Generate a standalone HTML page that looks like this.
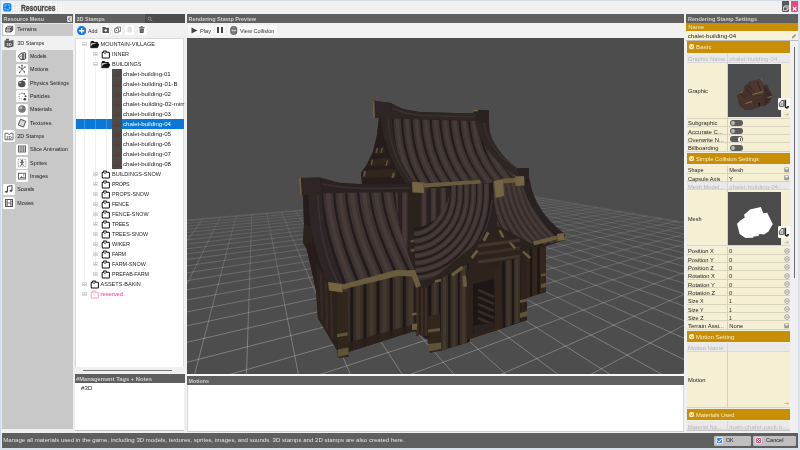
<!DOCTYPE html>
<html lang="en"><head><meta charset="utf-8"><title>Resources</title>
<style>
html,body{margin:0;padding:0}
body{width:800px;height:450px;overflow:hidden;background:#f0f0f0;position:relative;font-family:"Liberation Sans",sans-serif;}
.b{position:absolute;box-sizing:border-box}
.t{position:absolute;white-space:nowrap;transform-origin:0 50%;display:block}
svg{position:absolute;overflow:hidden}
#root{position:absolute;left:0;top:0;width:800px;height:450px;overflow:hidden;will-change:transform}
</style></head><body><div id="root">
<div class="b " style="left:0px;top:0px;width:800px;height:450px;background:#f0f0f0;"></div>
<div class="b " style="left:0px;top:0px;width:800px;height:1px;background:#d3dde9;"></div>
<div class="b " style="left:0px;top:0px;width:0.9px;height:450px;background:#cdd8e6;"></div>
<div class="b " style="left:798px;top:0px;width:2px;height:450px;background:#d9e1ea;"></div>
<div class="b " style="left:0px;top:448px;width:800px;height:2px;background:#d9e1ea;"></div>
<div class="b " style="left:13px;top:3px;width:51px;height:9.5px;background:#e6e6e6;background-image:repeating-linear-gradient(90deg,rgba(255,255,255,.55) 0 1px,transparent 1px 2.5px),repeating-linear-gradient(0deg,rgba(255,255,255,.55) 0 1px,transparent 1px 2.5px);"></div>
<svg style="left:3px;top:3px" width="8.5" height="8.5" viewBox="0 0 20 20"><rect width="20" height="20" rx="6" fill="#1a8cff"/><rect x="4.5" y="4.5" width="11" height="11" rx="2" fill="none" stroke="#9fd2ff" stroke-width="2" stroke-dasharray="4 3.3" stroke-dashoffset="2"/><circle cx="10" cy="10" r="2.6" fill="#0a6fe0"/></svg>
<span class="t" style="left:20.5px;top:0.98px;font-size:9.60px;line-height:13.44px;color:#4c4c4c;font-weight:bold;transform:scaleX(0.7028);-webkit-text-stroke:0.4px #4c4c4c;">Resources</span>
<div class="b " style="left:782px;top:0.6px;width:7.3px;height:11.7px;background:#585858;border-radius:0 0 1.5px 1.5px"></div>
<svg style="left:782px;top:4px" width="7.5" height="8" viewBox="0 0 15 16"><rect x="3" y="6" width="7" height="7" fill="none" stroke="#ddd" stroke-width="1.6"/><path d="M5.5 6V3.5h7v7H10" fill="none" stroke="#ddd" stroke-width="1.6"/></svg>
<div class="b " style="left:790.8px;top:0.6px;width:7.2px;height:11.7px;background:#e8487f;border-radius:0 0 1.5px 1.5px"></div>
<svg style="left:791px;top:5px" width="7.2" height="7" viewBox="0 0 14 14"><path d="M3.5 4l7 7M10.5 4l-7 7" stroke="#fff" stroke-width="2.4" fill="none"/></svg>
<div class="b " style="left:2px;top:14px;width:71px;height:9px;background:#5f5f5f;"></div>
<span class="t" style="left:3.5px;top:14.81px;font-size:5.44px;line-height:8.68px;color:#cfcfcf;font-weight:bold;">Resource Menu</span>
<div class="b " style="left:67.1px;top:15.6px;width:4.9px;height:6.3px;background:#d6d6d6;border-radius:1px"></div>
<svg style="left:67.1px;top:15.6px" width="4.9" height="6.3" viewBox="0 0 10 13"><path d="M7 2.500L3 6.500l4 4" stroke="#5a5a5a" stroke-width="2" fill="none"/></svg>
<div class="b " style="left:2px;top:23px;width:71px;height:406.3px;background:#c8c8c8;"></div>
<div class="b " style="left:2px;top:22.8px;width:71px;height:0.8px;background:#e4e4e4;"></div>
<div class="b " style="left:3.3px;top:23.65px;width:11.7px;height:11.7px;background:#fff;border-radius:1.5px"></div>
<svg style="left:4.1499999999999995px;top:24.45px" width="10" height="10" viewBox="0 0 20 20"><path d="M3.500 8.500l3.500-4h10.500l-3.500 4z" fill="#eee" stroke="#4a4a4a" stroke-width="1.700" stroke-linejoin="round"/><path d="M3.500 8.500h10.500v7.500H3.500z" fill="#999" stroke="#4a4a4a" stroke-width="1.700" stroke-linejoin="round"/><path d="M14 8.500l3.500-4v7.500L14 16z" fill="#666" stroke="#4a4a4a" stroke-width="1.700" stroke-linejoin="round"/><path d="M7 8.500v7.500M10.500 8.500v7.500M3.500 12.200h10.500" stroke="#ddd" stroke-width=".8"/></svg>
<span class="t" style="left:17.3px;top:24.79px;font-size:5.48px;line-height:8.68px;color:#1c1c1c;">Terrains</span>
<div class="b " style="left:2px;top:36.283px;width:71px;height:13.333px;background:#f0f0f0;"></div>
<div class="b " style="left:3.3px;top:36.983000000000004px;width:11.7px;height:11.7px;background:#f0f0f0;border-radius:1.5px"></div>
<svg style="left:4.1499999999999995px;top:37.78px" width="10" height="10" viewBox="0 0 20 20"><path d="M1 4.500l8 1.500 10-2v13l-10 2.500-8-2z" fill="#5a5a5a"/><path d="M4 1.500h6v4H4z" fill="#5a5a5a"/><text x="10" y="15" font-size="8.500" font-weight="bold" text-anchor="middle" fill="#e8e8e8" font-family="Liberation Sans,sans-serif">3D</text></svg>
<span class="t" style="left:17.3px;top:38.80px;font-size:5.46px;line-height:8.68px;color:#1c1c1c;">3D Stamps</span>
<div class="b " style="left:16.2px;top:50.316px;width:11.7px;height:11.7px;background:#fff;border-radius:1.5px"></div>
<svg style="left:17.05px;top:51.12px" width="10" height="10" viewBox="0 0 20 20"><path d="M2.500 10.500L8 4.500l8-1q1.200 0 1.200 1.500v9.500q0 1.500-1.200 1.800L8 17.500z" fill="#f4f4f4" stroke="#3c3c3c" stroke-width="2" stroke-linejoin="round"/><path d="M10.500 6.500l3.500-.5v9l-3.500.8z" fill="#8a8a8a" stroke="#3c3c3c" stroke-width="1.300"/><path d="M5 10.500h4" stroke="#3c3c3c" stroke-width="1.300"/></svg>
<span class="t" style="left:30px;top:51.84px;font-size:5.33px;line-height:8.68px;color:#1c1c1c;letter-spacing:-0.137px;">Models</span>
<div class="b " style="left:16.2px;top:63.649px;width:11.7px;height:11.7px;background:#fff;border-radius:1.5px"></div>
<svg style="left:17.05px;top:64.45px" width="10" height="10" viewBox="0 0 20 20"><path d="M10 3v7M4 6l6 4 6-4M10 10l-5 7M10 10l5 6" stroke="#555" stroke-width="1.6" fill="none"/><circle cx="10" cy="3" r="1.6" fill="#444"/><circle cx="4" cy="6" r="1.4" fill="#444"/><circle cx="16" cy="6" r="1.4" fill="#444"/><circle cx="5" cy="17" r="1.4" fill="#444"/><circle cx="15" cy="16" r="1.4" fill="#444"/></svg>
<span class="t" style="left:30px;top:64.84px;font-size:5.33px;line-height:8.68px;color:#1c1c1c;letter-spacing:-0.028px;">Motions</span>
<div class="b " style="left:16.2px;top:76.982px;width:11.7px;height:11.7px;background:#fff;border-radius:1.5px"></div>
<svg style="left:17.05px;top:77.78px" width="10" height="10" viewBox="0 0 20 20"><ellipse cx="9.500" cy="12" rx="7.500" ry="6.500" fill="#4e4e4e"/><path d="M10 6.500c.5-2.500 2-3.500 4-3.800" stroke="#444" stroke-width="1.600" fill="none"/><ellipse cx="15.500" cy="2.800" rx="2.600" ry="1.400" fill="#444"/><ellipse cx="6.500" cy="9.500" rx="3" ry="1.600" fill="#b8b8b8"/></svg>
<span class="t" style="left:30px;top:78.84px;font-size:5.33px;line-height:8.68px;color:#1c1c1c;letter-spacing:-0.008px;">Physics Settings</span>
<div class="b " style="left:16.2px;top:90.31500000000001px;width:11.7px;height:11.7px;background:#fff;border-radius:1.5px"></div>
<svg style="left:17.05px;top:91.12px" width="10" height="10" viewBox="0 0 20 20"><circle cx="15.500" cy="16.500" r="2.700" fill="#3e3e3e"/><circle cx="17" cy="10.500" r="1.900" fill="#4a4a4a"/><circle cx="14.500" cy="5.800" r="1.600" fill="#555"/><circle cx="10" cy="4.300" r="1.400" fill="#5a5a5a"/><circle cx="5.800" cy="6.200" r="1.300" fill="#666"/><circle cx="3.800" cy="10.500" r="1.200" fill="#6a6a6a"/><circle cx="5.200" cy="14.600" r="1.100" fill="#777"/><circle cx="8.800" cy="15.800" r="1" fill="#888"/><circle cx="10.500" cy="11" r=".9" fill="#999"/></svg>
<span class="t" style="left:30px;top:91.84px;font-size:5.33px;line-height:8.68px;color:#1c1c1c;letter-spacing:-0.056px;">Particles</span>
<div class="b " style="left:16.2px;top:103.64800000000001px;width:11.7px;height:11.7px;background:#fff;border-radius:1.5px"></div>
<svg style="left:17.05px;top:104.45px" width="10" height="10" viewBox="0 0 20 20"><circle cx="10" cy="10" r="7.5" fill="#777"/><circle cx="7.5" cy="7.5" r="3" fill="#bbb"/></svg>
<span class="t" style="left:30px;top:104.81px;font-size:5.42px;line-height:8.68px;color:#1c1c1c;">Materials</span>
<div class="b " style="left:16.2px;top:116.98100000000001px;width:11.7px;height:11.7px;background:#fff;border-radius:1.5px"></div>
<svg style="left:17.05px;top:117.78px" width="10" height="10" viewBox="0 0 20 20"><path d="M7 2.500l10.500 4-4.500 11.500-10.500-4z" fill="#d8d8d8" stroke="#4a4a4a" stroke-width="1.900" stroke-linejoin="round"/></svg>
<span class="t" style="left:30px;top:118.72px;font-size:5.69px;line-height:8.68px;color:#1c1c1c;">Textures</span>
<div class="b " style="left:3.3px;top:130.314px;width:11.7px;height:11.7px;background:#fff;border-radius:1.5px"></div>
<svg style="left:4.1499999999999995px;top:131.11px" width="10" height="10" viewBox="0 0 20 20"><path d="M2 4.500h5.500l1.500 2h3l1.500-2H18v13H2z" fill="none" stroke="#555" stroke-width="1.700"/><text x="10" y="15.500" font-size="8.500" font-weight="bold" text-anchor="middle" fill="#555" font-family="Liberation Sans,sans-serif">2D</text></svg>
<span class="t" style="left:17.3px;top:131.80px;font-size:5.46px;line-height:8.68px;color:#1c1c1c;">2D Stamps</span>
<div class="b " style="left:16.2px;top:143.647px;width:11.7px;height:11.7px;background:#fff;border-radius:1.5px"></div>
<svg style="left:17.05px;top:144.45px" width="10" height="10" viewBox="0 0 20 20"><rect x="3" y="4" width="14" height="12" fill="none" stroke="#555" stroke-width="1.8"/><path d="M3 8h14M3 12h14M8 4v12M12.500 4v12" stroke="#555" stroke-width="1.4"/></svg>
<span class="t" style="left:30px;top:144.76px;font-size:5.56px;line-height:8.68px;color:#1c1c1c;">Slice Animation</span>
<div class="b " style="left:16.2px;top:156.98px;width:11.7px;height:11.7px;background:#fff;border-radius:1.5px"></div>
<svg style="left:17.05px;top:157.78px" width="10" height="10" viewBox="0 0 20 20"><rect x="2.5" y="2.5" width="15" height="15" fill="none" stroke="#666" stroke-width="1.4" stroke-dasharray="2 1.6"/><path d="M10 6v5M6 8l4 2 4-2M10 11l-3 5M10 11l3 4" stroke="#444" stroke-width="1.8" fill="none"/><circle cx="10" cy="5.500" r="1.8" fill="#444"/></svg>
<span class="t" style="left:30px;top:158.80px;font-size:5.46px;line-height:8.68px;color:#1c1c1c;">Sprites</span>
<div class="b " style="left:16.2px;top:170.313px;width:11.7px;height:11.7px;background:#fff;border-radius:1.5px"></div>
<svg style="left:17.05px;top:171.11px" width="10" height="10" viewBox="0 0 20 20"><rect x="3" y="4.5" width="14" height="11.500" fill="none" stroke="#555" stroke-width="1.8"/><path d="M5 14l4-4 3 3 2-2 2 3z" fill="#666"/><circle cx="13.500" cy="8" r="1.3" fill="#666"/></svg>
<span class="t" style="left:30px;top:171.79px;font-size:5.49px;line-height:8.68px;color:#1c1c1c;">Images</span>
<div class="b " style="left:3.3px;top:183.646px;width:11.7px;height:11.7px;background:#fff;border-radius:1.5px"></div>
<svg style="left:4.1499999999999995px;top:184.45px" width="10" height="10" viewBox="0 0 20 20"><path d="M7 15V5l9-2v10" fill="none" stroke="#444" stroke-width="2"/><ellipse cx="5" cy="15.500" rx="2.8" ry="2.2" fill="#444"/><ellipse cx="14" cy="13.500" rx="2.8" ry="2.2" fill="#444"/></svg>
<span class="t" style="left:17.3px;top:184.84px;font-size:5.33px;line-height:8.68px;color:#1c1c1c;letter-spacing:-0.217px;">Sounds</span>
<div class="b " style="left:3.3px;top:196.97899999999998px;width:11.7px;height:11.7px;background:#fff;border-radius:1.5px"></div>
<svg style="left:4.1499999999999995px;top:197.78px" width="10" height="10" viewBox="0 0 20 20"><rect x="3" y="3" width="14" height="14" fill="none" stroke="#555" stroke-width="2"/><path d="M6.500 3v14M13.500 3v14M6.500 10h7" stroke="#555" stroke-width="1.6"/><path d="M3 6.500h3.500M3 10h3.500M3 13.500h3.500M13.500 6.500H17M13.500 10H17M13.500 13.500H17" stroke="#555" stroke-width="1.2"/></svg>
<span class="t" style="left:17.3px;top:198.84px;font-size:5.33px;line-height:8.68px;color:#1c1c1c;letter-spacing:-0.078px;">Movies</span>
<div class="b " style="left:74.7px;top:14px;width:110px;height:9px;background:#5f5f5f;"></div>
<span class="t" style="left:76.5px;top:14.78px;font-size:5.51px;line-height:8.68px;color:#cfcfcf;font-weight:bold;">3D Stamps</span>
<div class="b " style="left:145.3px;top:14.3px;width:39.4px;height:8.4px;background:#4c4c4c;"></div>
<svg style="left:147px;top:15.5px" width="6" height="6" viewBox="0 0 12 12"><circle cx="5" cy="5" r="3" fill="none" stroke="#999" stroke-width="1.6"/><path d="M7.200 7.200L10.500 10.500" stroke="#999" stroke-width="1.8"/></svg>
<svg style="left:76.5px;top:25.8px" width="9.4" height="9.4" viewBox="0 0 20 20"><circle cx="10" cy="10" r="10" fill="#1478f0"/><path d="M10 4.500v11M4.500 10h11" stroke="#fff" stroke-width="3"/></svg>
<span class="t" style="left:88px;top:26.98px;font-size:5.34px;line-height:8.4px;color:#333;">Add</span>
<div class="b " style="left:101px;top:25.4px;width:9px;height:9.4px;background:#fff;border-radius:1.2px"></div>
<div class="b " style="left:113px;top:25.4px;width:9px;height:9.4px;background:#fff;border-radius:1.2px"></div>
<div class="b " style="left:125px;top:25.4px;width:9px;height:9.4px;background:#fff;border-radius:1.2px"></div>
<div class="b " style="left:137.5px;top:25.4px;width:9px;height:9.4px;background:#fff;border-radius:1.2px"></div>
<svg style="left:101.8px;top:26.4px" width="7.4" height="7.4" viewBox="0 0 16 16"><path d="M1 2h6l1.500 2H15v11H1z" fill="#555"/><path d="M8 6.500v6M5 9.500h6" stroke="#fff" stroke-width="2"/></svg>
<svg style="left:113.8px;top:26.4px" width="7.4" height="7.4" viewBox="0 0 16 16"><rect x="1.500" y="5" width="8.500" height="9.500" rx="1" fill="#fff" stroke="#555" stroke-width="1.700"/><path d="M6 4V2.200h8.500v9.300H11" fill="none" stroke="#555" stroke-width="1.700"/><path d="M4 8.500l3 3M7 8.500l-3 3" stroke="#555" stroke-width="1.200"/></svg>
<svg style="left:125.8px;top:26.4px" width="7.4" height="7.4" viewBox="0 0 16 16"><path d="M3 3h10v11H3z" fill="#e2e2e2"/><path d="M5 1.500h6V5H5z" fill="#d6d6d6"/></svg>
<svg style="left:138.300px;top:26.4px" width="7.4" height="7.4" viewBox="0 0 16 16"><path d="M3 5.500h10l-1 9.500H4z" fill="#555"/><path d="M1.500 3.500h13M6 3.500V1.500h4v2" stroke="#555" stroke-width="1.800" fill="none"/><path d="M6 7.500v5.500M8 7.500v5.500M10 7.500v5.500" stroke="#999" stroke-width=".8"/></svg>
<div class="b " style="left:74.5px;top:38px;width:109.8px;height:329.5px;background:#fff;border:0.7px solid #dcdcdc;border-bottom:none"></div>
<div class="b " style="left:84.15px;top:47px;width:0.7px;height:249px;background:#f1f1f1;"></div>
<div class="b " style="left:95.15px;top:57px;width:0.7px;height:218px;background:#f1f1f1;"></div>
<div class="b " style="left:106.15px;top:67px;width:0.7px;height:103px;background:#f1f1f1;"></div>
<div class="b " style="left:75.7px;top:119.39999999999999px;width:108.3px;height:9.6px;background:#0a78d7;"></div>
<div class="b " style="left:84.15px;top:119.39999999999999px;width:0.7px;height:9.6px;background:#3d93df;"></div>
<div class="b " style="left:95.15px;top:119.39999999999999px;width:0.7px;height:9.6px;background:#3d93df;"></div>
<div class="b " style="left:106.15px;top:119.39999999999999px;width:0.7px;height:9.6px;background:#3d93df;"></div>
<div class="b " style="left:112px;top:68.89999999999999px;width:9.7px;height:100.6px;background:#4c4c4c;"></div>
<svg style="left:112px;top:69.30px" width="9.700" height="10" viewBox="0 0 20 20"><path d="M3.500 11q1-5.500 6.500-6.500 5.500 0 7 5.500 0 4.500-3.500 6-4 1-7.500-.5-2.500-1.500-2.500-4.500z" fill="#55423a"/><path d="M6 9.500q4-3 8 0" stroke="#6a5245" stroke-width="1.200" fill="none"/></svg>
<svg style="left:112px;top:79.30px" width="9.700" height="10" viewBox="0 0 20 20"><path d="M3.500 11q1-5.500 6.500-6.500 5.500 0 7 5.500 0 4.500-3.500 6-4 1-7.500-.5-2.500-1.500-2.500-4.500z" fill="#55423a"/><path d="M6 9.500q4-3 8 0" stroke="#6a5245" stroke-width="1.200" fill="none"/></svg>
<svg style="left:112px;top:89.30px" width="9.700" height="10" viewBox="0 0 20 20"><path d="M3.500 11q1-5.500 6.500-6.500 5.500 0 7 5.500 0 4.500-3.500 6-4 1-7.500-.5-2.500-1.500-2.500-4.500z" fill="#55423a"/><path d="M6 9.500q4-3 8 0" stroke="#6a5245" stroke-width="1.200" fill="none"/></svg>
<svg style="left:112px;top:99.30px" width="9.700" height="10" viewBox="0 0 20 20"><path d="M3.500 11q1-5.500 6.500-6.500 5.500 0 7 5.500 0 4.500-3.500 6-4 1-7.500-.5-2.500-1.500-2.500-4.500z" fill="#55423a"/><path d="M6 9.500q4-3 8 0" stroke="#6a5245" stroke-width="1.200" fill="none"/></svg>
<svg style="left:112px;top:109.30px" width="9.700" height="10" viewBox="0 0 20 20"><path d="M3.500 11q1-5.500 6.500-6.500 5.500 0 7 5.500 0 4.500-3.500 6-4 1-7.500-.5-2.500-1.500-2.500-4.500z" fill="#55423a"/><path d="M6 9.500q4-3 8 0" stroke="#6a5245" stroke-width="1.200" fill="none"/></svg>
<svg style="left:112px;top:119.30px" width="9.700" height="10" viewBox="0 0 20 20"><path d="M3.500 11q1-5.500 6.500-6.500 5.500 0 7 5.500 0 4.500-3.500 6-4 1-7.500-.5-2.500-1.500-2.500-4.500z" fill="#55423a"/><path d="M6 9.500q4-3 8 0" stroke="#6a5245" stroke-width="1.200" fill="none"/></svg>
<svg style="left:112px;top:129.30px" width="9.700" height="10" viewBox="0 0 20 20"><path d="M3.500 11q1-5.500 6.500-6.500 5.500 0 7 5.500 0 4.500-3.500 6-4 1-7.500-.5-2.500-1.500-2.500-4.500z" fill="#55423a"/><path d="M6 9.500q4-3 8 0" stroke="#6a5245" stroke-width="1.200" fill="none"/></svg>
<svg style="left:112px;top:139.30px" width="9.700" height="10" viewBox="0 0 20 20"><path d="M3.500 11q1-5.500 6.500-6.500 5.500 0 7 5.500 0 4.500-3.500 6-4 1-7.500-.5-2.500-1.500-2.500-4.500z" fill="#55423a"/><path d="M6 9.500q4-3 8 0" stroke="#6a5245" stroke-width="1.200" fill="none"/></svg>
<svg style="left:112px;top:149.30px" width="9.700" height="10" viewBox="0 0 20 20"><path d="M3.500 11q1-5.500 6.500-6.500 5.500 0 7 5.500 0 4.500-3.500 6-4 1-7.500-.5-2.500-1.500-2.500-4.500z" fill="#55423a"/><path d="M6 9.500q4-3 8 0" stroke="#6a5245" stroke-width="1.200" fill="none"/></svg>
<svg style="left:112px;top:159.30px" width="9.700" height="10" viewBox="0 0 20 20"><path d="M3.500 11q1-5.500 6.500-6.500 5.500 0 7 5.500 0 4.500-3.500 6-4 1-7.500-.5-2.500-1.500-2.500-4.500z" fill="#55423a"/><path d="M6 9.500q4-3 8 0" stroke="#6a5245" stroke-width="1.200" fill="none"/></svg>
<div class="b " style="left:82.4px;top:42.199999999999996px;width:4.2px;height:4.2px;background:#fcfcfc;border:0.6px solid #dadada"></div>
<div class="b " style="left:83.4px;top:44.0px;width:2.2px;height:0.6px;background:#c8c8c8;"></div>
<svg style="left:89.7px;top:39.70px" width="9.6" height="9.200" viewBox="0 0 20 19"><path d="M2 15.500V4.500q0-1.500 1.500-1.500h3.800l1.500 2h6.700v3" fill="#111" stroke="#111" stroke-width="2" stroke-linejoin="round"/><path d="M1.500 16l3-7.500h14.500l-3.500 7.500z" fill="#111" stroke="#111" stroke-width="1.500" stroke-linejoin="round"/><path d="M4.200 9.200l-1.700 5V6.500h12z" fill="#fff"/></svg>
<span class="t" style="left:100.5px;top:39.76px;font-size:5.58px;line-height:8.68px;color:#1e1e1e;">MOUNTAIN-VILLAGE</span>
<div class="b " style="left:93.4px;top:52.199999999999996px;width:4.2px;height:4.2px;background:#fcfcfc;border:0.6px solid #dadada"></div>
<div class="b " style="left:94.4px;top:54.0px;width:2.2px;height:0.6px;background:#c8c8c8;"></div>
<div class="b " style="left:95.2px;top:53.199999999999996px;width:0.6px;height:2.2px;background:#c8c8c8;"></div>
<svg style="left:100.8px;top:49.70px" width="9.6" height="9.200" viewBox="0 0 20 19"><path d="M2.500 6q0-1.500 1.500-1.500h1.500v-2.500h5.500v2.500h5q1.500 0 1.500 1.500v9q0 1.500-1.500 1.500h-12q-1.500 0-1.500-1.500z" fill="#fff" stroke="#111" stroke-width="2.1" stroke-linejoin="round"/><path d="M6 6.500h4.500" stroke="#111" stroke-width="1.700"/></svg>
<span class="t" style="left:112.0px;top:49.80px;font-size:5.46px;line-height:8.68px;color:#1e1e1e;">INNER</span>
<div class="b " style="left:93.4px;top:62.199999999999996px;width:4.2px;height:4.2px;background:#fcfcfc;border:0.6px solid #dadada"></div>
<div class="b " style="left:94.4px;top:64.0px;width:2.2px;height:0.6px;background:#c8c8c8;"></div>
<svg style="left:100.8px;top:59.70px" width="9.6" height="9.200" viewBox="0 0 20 19"><path d="M2 15.500V4.500q0-1.500 1.500-1.500h3.800l1.500 2h6.700v3" fill="#111" stroke="#111" stroke-width="2" stroke-linejoin="round"/><path d="M1.500 16l3-7.500h14.500l-3.500 7.500z" fill="#111" stroke="#111" stroke-width="1.500" stroke-linejoin="round"/><path d="M4.200 9.200l-1.700 5V6.500h12z" fill="#fff"/></svg>
<span class="t" style="left:112.0px;top:59.79px;font-size:5.47px;line-height:8.68px;color:#1e1e1e;">BUILDINGS</span>
<span class="t" style="left:123px;top:69.59px;font-size:6.06px;line-height:8.68px;color:#1e1e1e;">chalet-building-01</span>
<span class="t" style="left:123px;top:79.57px;font-size:6.13px;line-height:8.68px;color:#1e1e1e;">chalet-building-01-B</span>
<span class="t" style="left:123px;top:89.58px;font-size:6.08px;line-height:8.68px;color:#1e1e1e;">chalet-building-02</span>
<span class="t" style="left:123px;top:99.55px;font-size:6.18px;line-height:8.68px;color:#1e1e1e;">chalet-building-02-mirr</span>
<span class="t" style="left:123px;top:109.58px;font-size:6.08px;line-height:8.68px;color:#1e1e1e;">chalet-building-03</span>
<span class="t" style="left:123px;top:119.58px;font-size:6.08px;line-height:8.68px;color:#fff;">chalet-building-04</span>
<span class="t" style="left:123px;top:129.58px;font-size:6.08px;line-height:8.68px;color:#1e1e1e;">chalet-building-05</span>
<span class="t" style="left:123px;top:139.58px;font-size:6.08px;line-height:8.68px;color:#1e1e1e;">chalet-building-06</span>
<span class="t" style="left:123px;top:149.58px;font-size:6.08px;line-height:8.68px;color:#1e1e1e;">chalet-building-07</span>
<span class="t" style="left:123px;top:159.58px;font-size:6.08px;line-height:8.68px;color:#1e1e1e;">chalet-building-08</span>
<div class="b " style="left:93.4px;top:172.20000000000002px;width:4.2px;height:4.2px;background:#fcfcfc;border:0.6px solid #dadada"></div>
<div class="b " style="left:94.4px;top:174.0px;width:2.2px;height:0.6px;background:#c8c8c8;"></div>
<div class="b " style="left:95.2px;top:173.20000000000002px;width:0.6px;height:2.2px;background:#c8c8c8;"></div>
<svg style="left:100.8px;top:169.70px" width="9.6" height="9.200" viewBox="0 0 20 19"><path d="M2.500 6q0-1.500 1.500-1.500h1.500v-2.500h5.500v2.500h5q1.500 0 1.500 1.500v9q0 1.500-1.500 1.500h-12q-1.500 0-1.500-1.500z" fill="#fff" stroke="#111" stroke-width="2.1" stroke-linejoin="round"/><path d="M6 6.500h4.500" stroke="#111" stroke-width="1.700"/></svg>
<span class="t" style="left:112.0px;top:169.77px;font-size:5.55px;line-height:8.68px;color:#1e1e1e;">BUILDINGS-SNOW</span>
<div class="b " style="left:93.4px;top:182.20000000000002px;width:4.2px;height:4.2px;background:#fcfcfc;border:0.6px solid #dadada"></div>
<div class="b " style="left:94.4px;top:184.0px;width:2.2px;height:0.6px;background:#c8c8c8;"></div>
<div class="b " style="left:95.2px;top:183.20000000000002px;width:0.6px;height:2.2px;background:#c8c8c8;"></div>
<svg style="left:100.8px;top:179.70px" width="9.6" height="9.200" viewBox="0 0 20 19"><path d="M2.500 6q0-1.500 1.500-1.500h1.500v-2.500h5.500v2.500h5q1.500 0 1.500 1.500v9q0 1.500-1.500 1.500h-12q-1.500 0-1.500-1.500z" fill="#fff" stroke="#111" stroke-width="2.1" stroke-linejoin="round"/><path d="M6 6.500h4.500" stroke="#111" stroke-width="1.700"/></svg>
<span class="t" style="left:112.0px;top:179.84px;font-size:5.33px;line-height:8.68px;color:#1e1e1e;letter-spacing:-0.292px;">PROPS</span>
<div class="b " style="left:93.4px;top:192.20000000000002px;width:4.2px;height:4.2px;background:#fcfcfc;border:0.6px solid #dadada"></div>
<div class="b " style="left:94.4px;top:194.0px;width:2.2px;height:0.6px;background:#c8c8c8;"></div>
<div class="b " style="left:95.2px;top:193.20000000000002px;width:0.6px;height:2.2px;background:#c8c8c8;"></div>
<svg style="left:100.8px;top:189.70px" width="9.6" height="9.200" viewBox="0 0 20 19"><path d="M2.500 6q0-1.500 1.500-1.500h1.500v-2.500h5.500v2.500h5q1.500 0 1.500 1.500v9q0 1.500-1.500 1.500h-12q-1.500 0-1.500-1.500z" fill="#fff" stroke="#111" stroke-width="2.1" stroke-linejoin="round"/><path d="M6 6.500h4.500" stroke="#111" stroke-width="1.700"/></svg>
<span class="t" style="left:112.0px;top:189.84px;font-size:5.33px;line-height:8.68px;color:#1e1e1e;">PROPS-SNOW</span>
<div class="b " style="left:93.4px;top:202.20000000000002px;width:4.2px;height:4.2px;background:#fcfcfc;border:0.6px solid #dadada"></div>
<div class="b " style="left:94.4px;top:204.0px;width:2.2px;height:0.6px;background:#c8c8c8;"></div>
<div class="b " style="left:95.2px;top:203.20000000000002px;width:0.6px;height:2.2px;background:#c8c8c8;"></div>
<svg style="left:100.8px;top:199.70px" width="9.6" height="9.200" viewBox="0 0 20 19"><path d="M2.500 6q0-1.500 1.500-1.500h1.500v-2.500h5.500v2.500h5q1.500 0 1.500 1.500v9q0 1.500-1.500 1.500h-12q-1.500 0-1.500-1.500z" fill="#fff" stroke="#111" stroke-width="2.1" stroke-linejoin="round"/><path d="M6 6.500h4.500" stroke="#111" stroke-width="1.700"/></svg>
<span class="t" style="left:112.0px;top:199.84px;font-size:5.33px;line-height:8.68px;color:#1e1e1e;letter-spacing:-0.268px;">FENCE</span>
<div class="b " style="left:93.4px;top:212.20000000000002px;width:4.2px;height:4.2px;background:#fcfcfc;border:0.6px solid #dadada"></div>
<div class="b " style="left:94.4px;top:214.0px;width:2.2px;height:0.6px;background:#c8c8c8;"></div>
<div class="b " style="left:95.2px;top:213.20000000000002px;width:0.6px;height:2.2px;background:#c8c8c8;"></div>
<svg style="left:100.8px;top:209.70px" width="9.6" height="9.200" viewBox="0 0 20 19"><path d="M2.500 6q0-1.500 1.500-1.500h1.500v-2.500h5.500v2.500h5q1.500 0 1.500 1.500v9q0 1.500-1.500 1.500h-12q-1.500 0-1.500-1.500z" fill="#fff" stroke="#111" stroke-width="2.1" stroke-linejoin="round"/><path d="M6 6.500h4.500" stroke="#111" stroke-width="1.700"/></svg>
<span class="t" style="left:112.0px;top:209.84px;font-size:5.34px;line-height:8.68px;color:#1e1e1e;">FENCE-SNOW</span>
<div class="b " style="left:93.4px;top:222.20000000000002px;width:4.2px;height:4.2px;background:#fcfcfc;border:0.6px solid #dadada"></div>
<div class="b " style="left:94.4px;top:224.0px;width:2.2px;height:0.6px;background:#c8c8c8;"></div>
<div class="b " style="left:95.2px;top:223.20000000000002px;width:0.6px;height:2.2px;background:#c8c8c8;"></div>
<svg style="left:100.8px;top:219.70px" width="9.6" height="9.200" viewBox="0 0 20 19"><path d="M2.500 6q0-1.500 1.500-1.500h1.500v-2.500h5.500v2.500h5q1.500 0 1.500 1.500v9q0 1.500-1.500 1.500h-12q-1.500 0-1.500-1.500z" fill="#fff" stroke="#111" stroke-width="2.1" stroke-linejoin="round"/><path d="M6 6.500h4.500" stroke="#111" stroke-width="1.700"/></svg>
<span class="t" style="left:112.0px;top:219.84px;font-size:5.33px;line-height:8.68px;color:#1e1e1e;letter-spacing:-0.194px;">TREES</span>
<div class="b " style="left:93.4px;top:232.20000000000002px;width:4.2px;height:4.2px;background:#fcfcfc;border:0.6px solid #dadada"></div>
<div class="b " style="left:94.4px;top:234.0px;width:2.2px;height:0.6px;background:#c8c8c8;"></div>
<div class="b " style="left:95.2px;top:233.20000000000002px;width:0.6px;height:2.2px;background:#c8c8c8;"></div>
<svg style="left:100.8px;top:229.70px" width="9.6" height="9.200" viewBox="0 0 20 19"><path d="M2.500 6q0-1.500 1.500-1.500h1.500v-2.500h5.500v2.500h5q1.500 0 1.500 1.500v9q0 1.500-1.500 1.500h-12q-1.500 0-1.500-1.500z" fill="#fff" stroke="#111" stroke-width="2.1" stroke-linejoin="round"/><path d="M6 6.500h4.500" stroke="#111" stroke-width="1.700"/></svg>
<span class="t" style="left:112.0px;top:229.84px;font-size:5.33px;line-height:8.68px;color:#1e1e1e;letter-spacing:-0.016px;">TREES-SNOW</span>
<div class="b " style="left:93.4px;top:242.20000000000002px;width:4.2px;height:4.2px;background:#fcfcfc;border:0.6px solid #dadada"></div>
<div class="b " style="left:94.4px;top:244.0px;width:2.2px;height:0.6px;background:#c8c8c8;"></div>
<div class="b " style="left:95.2px;top:243.20000000000002px;width:0.6px;height:2.2px;background:#c8c8c8;"></div>
<svg style="left:100.8px;top:239.70px" width="9.6" height="9.200" viewBox="0 0 20 19"><path d="M2.500 6q0-1.500 1.500-1.500h1.500v-2.500h5.500v2.500h5q1.500 0 1.500 1.500v9q0 1.500-1.500 1.500h-12q-1.500 0-1.500-1.500z" fill="#fff" stroke="#111" stroke-width="2.1" stroke-linejoin="round"/><path d="M6 6.500h4.500" stroke="#111" stroke-width="1.700"/></svg>
<span class="t" style="left:112.0px;top:239.79px;font-size:5.49px;line-height:8.68px;color:#1e1e1e;">WIKER</span>
<div class="b " style="left:93.4px;top:252.20000000000002px;width:4.2px;height:4.2px;background:#fcfcfc;border:0.6px solid #dadada"></div>
<div class="b " style="left:94.4px;top:254.0px;width:2.2px;height:0.6px;background:#c8c8c8;"></div>
<div class="b " style="left:95.2px;top:253.20000000000002px;width:0.6px;height:2.2px;background:#c8c8c8;"></div>
<svg style="left:100.8px;top:249.70px" width="9.6" height="9.200" viewBox="0 0 20 19"><path d="M2.500 6q0-1.500 1.500-1.500h1.500v-2.500h5.500v2.500h5q1.500 0 1.500 1.500v9q0 1.500-1.500 1.500h-12q-1.500 0-1.500-1.500z" fill="#fff" stroke="#111" stroke-width="2.1" stroke-linejoin="round"/><path d="M6 6.500h4.500" stroke="#111" stroke-width="1.700"/></svg>
<span class="t" style="left:112.0px;top:249.84px;font-size:5.33px;line-height:8.68px;color:#1e1e1e;letter-spacing:-0.270px;">FARM</span>
<div class="b " style="left:93.4px;top:262.2px;width:4.2px;height:4.2px;background:#fcfcfc;border:0.6px solid #dadada"></div>
<div class="b " style="left:94.4px;top:264.0px;width:2.2px;height:0.6px;background:#c8c8c8;"></div>
<div class="b " style="left:95.2px;top:263.2px;width:0.6px;height:2.2px;background:#c8c8c8;"></div>
<svg style="left:100.8px;top:259.70px" width="9.6" height="9.200" viewBox="0 0 20 19"><path d="M2.500 6q0-1.500 1.500-1.500h1.500v-2.500h5.500v2.500h5q1.500 0 1.500 1.500v9q0 1.500-1.500 1.500h-12q-1.500 0-1.500-1.500z" fill="#fff" stroke="#111" stroke-width="2.1" stroke-linejoin="round"/><path d="M6 6.500h4.500" stroke="#111" stroke-width="1.700"/></svg>
<span class="t" style="left:112.0px;top:259.80px;font-size:5.46px;line-height:8.68px;color:#1e1e1e;">FARM-SNOW</span>
<div class="b " style="left:93.4px;top:272.2px;width:4.2px;height:4.2px;background:#fcfcfc;border:0.6px solid #dadada"></div>
<div class="b " style="left:94.4px;top:274.0px;width:2.2px;height:0.6px;background:#c8c8c8;"></div>
<div class="b " style="left:95.2px;top:273.2px;width:0.6px;height:2.2px;background:#c8c8c8;"></div>
<svg style="left:100.8px;top:269.70px" width="9.6" height="9.200" viewBox="0 0 20 19"><path d="M2.500 6q0-1.500 1.500-1.500h1.500v-2.500h5.500v2.500h5q1.500 0 1.500 1.500v9q0 1.500-1.500 1.500h-12q-1.500 0-1.500-1.500z" fill="#fff" stroke="#111" stroke-width="2.1" stroke-linejoin="round"/><path d="M6 6.500h4.500" stroke="#111" stroke-width="1.700"/></svg>
<span class="t" style="left:112.0px;top:269.84px;font-size:5.33px;line-height:8.68px;color:#1e1e1e;letter-spacing:-0.063px;">PREFAB-FARM</span>
<div class="b " style="left:82.4px;top:282.2px;width:4.2px;height:4.2px;background:#fcfcfc;border:0.6px solid #dadada"></div>
<div class="b " style="left:83.4px;top:284.0px;width:2.2px;height:0.6px;background:#c8c8c8;"></div>
<div class="b " style="left:84.2px;top:283.2px;width:0.6px;height:2.2px;background:#c8c8c8;"></div>
<svg style="left:89.7px;top:279.70px" width="9.6" height="9.200" viewBox="0 0 20 19"><path d="M2.500 6q0-1.500 1.500-1.500h1.500v-2.500h5.500v2.500h5q1.500 0 1.500 1.500v9q0 1.500-1.500 1.500h-12q-1.500 0-1.500-1.500z" fill="#fff" stroke="#111" stroke-width="2.1" stroke-linejoin="round"/><path d="M6 6.500h4.500" stroke="#111" stroke-width="1.700"/></svg>
<span class="t" style="left:100.5px;top:279.76px;font-size:5.56px;line-height:8.68px;color:#1e1e1e;">ASSETS-BAKIN</span>
<div class="b " style="left:82.4px;top:292.2px;width:4.2px;height:4.2px;background:#fcfcfc;border:0.6px solid #dadada"></div>
<div class="b " style="left:83.4px;top:294.0px;width:2.2px;height:0.6px;background:#c8c8c8;"></div>
<div class="b " style="left:84.2px;top:293.2px;width:0.6px;height:2.2px;background:#c8c8c8;"></div>
<svg style="left:89.7px;top:289.70px" width="9.6" height="9.200" viewBox="0 0 20 19"><path d="M2.500 6q0-1.500 1.500-1.500h1.500v-2.500h5.500v2.500h5q1.500 0 1.500 1.500v9q0 1.500-1.500 1.500h-12q-1.500 0-1.500-1.500z" fill="#fff" stroke="#f5a6cc" stroke-width="2.1" stroke-linejoin="round"/><path d="M6 6.500h4.500" stroke="#f5a6cc" stroke-width="1.700"/></svg>
<span class="t" style="left:100.5px;top:289.69px;font-size:5.78px;line-height:8.68px;color:#e8388a;">reserved</span>
<div class="b " style="left:184.5px;top:38px;width:2.5px;height:330px;background:#f0f0f0;"></div>
<div class="b " style="left:74.2px;top:366.8px;width:110px;height:7.5px;background:#f0f0f0;"></div>
<div class="b " style="left:82.5px;top:369.8px;width:89.5px;height:0.9px;background:#777;"></div>
<div class="b " style="left:74.7px;top:374.3px;width:110px;height:8.6px;background:#5f5f5f;"></div>
<span class="t" style="left:76px;top:374.75px;font-size:5.79px;line-height:8.54px;color:#cfcfcf;font-weight:bold;">#Management Tags + Notes</span>
<div class="b " style="left:74.7px;top:383.2px;width:109.5px;height:47px;background:#fff;"></div>
<div class="b " style="left:74.7px;top:430.2px;width:109.5px;height:1.2px;background:#c4c4c4;"></div>
<span class="t" style="left:81px;top:383.65px;font-size:6.10px;line-height:8.54px;color:#1e1e1e;letter-spacing:0.155px;">#3D</span>
<div class="b " style="left:187px;top:14px;width:497px;height:9px;background:#5f5f5f;"></div>
<span class="t" style="left:188.5px;top:14.79px;font-size:5.47px;line-height:8.68px;color:#cfcfcf;font-weight:bold;">Rendering Stamp Preview</span>
<div class="b " style="left:187.8px;top:25.4px;width:25px;height:9.6px;background:#f8f8f8;border-radius:1.2px"></div>
<div class="b " style="left:227.5px;top:25.4px;width:49.5px;height:9.6px;background:#f8f8f8;border-radius:1.2px"></div>
<svg style="left:190.500px;top:27px" width="7" height="7" viewBox="0 0 14 14"><path d="M1 1l12 6-12 6z" fill="#444"/></svg>
<span class="t" style="left:200px;top:26.87px;font-size:5.65px;line-height:8.4px;color:#333;">Play</span>
<div class="b " style="left:214.5px;top:25.4px;width:10.5px;height:9.6px;background:#f8f8f8;border-radius:1.2px"></div>
<div class="b " style="left:217.3px;top:27.4px;width:2px;height:5.8px;background:#444;"></div>
<div class="b " style="left:221px;top:27.4px;width:2px;height:5.8px;background:#444;"></div>
<svg style="left:230px;top:26px" width="7.500" height="9" viewBox="0 0 15 18"><rect x="1.500" y="1.200" width="12" height="15.600" rx="4.500" fill="#8e8e8e" stroke="#555" stroke-width="1.800"/><path d="M1.500 6h12M1.500 12h12" stroke="#555" stroke-width="1.700"/><path d="M3.500 7.500h3.200v3H3.500zM8.300 7.500h3.200v3H8.300z" fill="#dcdcdc"/></svg>
<span class="t" style="left:240px;top:26.90px;font-size:5.56px;line-height:8.4px;color:#333;">View Collision</span>
<svg style="left:187px;top:38px" width="497" height="336.5" viewBox="187 38 497 336.5">
<rect x="187" y="38" width="497" height="336.5" fill="#4d4d4d"/>
<defs><linearGradient id="gf" gradientUnits="userSpaceOnUse" x1="0" y1="195" x2="0" y2="345"><stop offset="0" stop-color="#fff" stop-opacity="0.06"/><stop offset="0.4" stop-color="#fff" stop-opacity="0.17"/><stop offset="1" stop-color="#fff" stop-opacity="0.32"/></linearGradient></defs>
<g stroke="url(#gf)" stroke-width="0.85" fill="none">
<line x1="185.5" y1="220.1" x2="185.0" y2="220.6"/>
<line x1="203.1" y1="218.6" x2="185.0" y2="243.6"/>
<line x1="220.0" y1="217.1" x2="185.0" y2="288.2"/>
<line x1="236.2" y1="215.7" x2="194.0" y2="376.5"/>
<line x1="251.8" y1="214.4" x2="246.4" y2="376.5"/>
<line x1="266.8" y1="213.1" x2="298.8" y2="376.5"/>
<line x1="281.2" y1="211.8" x2="351.3" y2="376.5"/>
<line x1="295.0" y1="210.6" x2="403.7" y2="376.5"/>
<line x1="308.4" y1="209.5" x2="456.1" y2="376.5"/>
<line x1="321.2" y1="208.4" x2="508.5" y2="376.5"/>
<line x1="333.6" y1="207.3" x2="560.9" y2="376.5"/>
<line x1="345.6" y1="206.3" x2="613.4" y2="376.5"/>
<line x1="357.2" y1="205.3" x2="665.8" y2="376.5"/>
<line x1="368.4" y1="204.3" x2="686.0" y2="360.6"/>
<line x1="379.2" y1="203.4" x2="686.0" y2="339.1"/>
<line x1="389.6" y1="202.5" x2="686.0" y2="321.5"/>
<line x1="399.7" y1="201.6" x2="686.0" y2="306.8"/>
<line x1="409.5" y1="200.7" x2="686.0" y2="294.5"/>
<line x1="419.0" y1="199.9" x2="686.0" y2="283.9"/>
<line x1="428.2" y1="199.1" x2="686.0" y2="274.8"/>
<line x1="437.1" y1="198.3" x2="686.0" y2="266.8"/>
<line x1="445.8" y1="197.6" x2="686.0" y2="259.7"/>
<line x1="454.2" y1="196.9" x2="686.0" y2="253.5"/>
<line x1="462.4" y1="196.2" x2="686.0" y2="247.9"/>
<line x1="470.3" y1="195.5" x2="686.0" y2="242.8"/>
<line x1="478.0" y1="194.8" x2="686.0" y2="238.3"/>
<line x1="485.5" y1="194.2" x2="686.0" y2="234.2"/>
<line x1="492.8" y1="193.5" x2="686.0" y2="230.4"/>
<line x1="499.9" y1="192.9" x2="686.0" y2="226.9"/>
<line x1="506.8" y1="192.3" x2="686.0" y2="223.8"/>
<line x1="509.5" y1="192.1" x2="686.0" y2="222.6"/>
<line x1="511.3" y1="192.4" x2="185.0" y2="220.9"/>
<line x1="517.3" y1="193.5" x2="185.0" y2="223.5"/>
<line x1="523.7" y1="194.6" x2="185.0" y2="226.3"/>
<line x1="530.4" y1="195.7" x2="185.0" y2="229.4"/>
<line x1="537.5" y1="196.9" x2="185.0" y2="232.7"/>
<line x1="544.9" y1="198.2" x2="185.0" y2="236.2"/>
<line x1="552.6" y1="199.5" x2="185.0" y2="240.1"/>
<line x1="560.9" y1="201.0" x2="185.0" y2="244.3"/>
<line x1="569.6" y1="202.5" x2="185.0" y2="249.0"/>
<line x1="578.8" y1="204.1" x2="185.0" y2="254.1"/>
<line x1="588.5" y1="205.7" x2="185.0" y2="259.7"/>
<line x1="598.9" y1="207.5" x2="185.0" y2="266.0"/>
<line x1="609.9" y1="209.4" x2="185.0" y2="273.1"/>
<line x1="621.6" y1="211.5" x2="185.0" y2="281.0"/>
<line x1="634.2" y1="213.6" x2="185.0" y2="290.0"/>
<line x1="647.6" y1="215.9" x2="185.0" y2="300.3"/>
<line x1="662.0" y1="218.4" x2="185.0" y2="312.3"/>
<line x1="677.6" y1="221.1" x2="185.0" y2="326.2"/>
<line x1="686.0" y1="225.9" x2="185.0" y2="342.8"/>
<line x1="686.0" y1="233.9" x2="185.0" y2="362.8"/>
<line x1="686.0" y1="243.7" x2="222.7" y2="376.5"/>
<line x1="686.0" y1="256.1" x2="313.7" y2="376.5"/>
<line x1="686.0" y1="272.0" x2="404.8" y2="376.5"/>
<line x1="686.0" y1="293.6" x2="495.8" y2="376.5"/>
<line x1="686.0" y1="324.2" x2="586.8" y2="376.5"/>
<line x1="686.0" y1="371.1" x2="677.9" y2="376.5"/>
<line x1="509.5" y1="192.1" x2="185.0" y2="220.1"/>
</g>
<defs><filter id="bb" x="-5%" y="-5%" width="110%" height="110%"><feGaussianBlur stdDeviation="0.55"/></filter></defs>
<g filter="url(#bb)">
<polygon points="372.5,100.5 391,103 402,109 420,112 472,113.5 476,110 489,110.3 489,122.5 490,140 500,156 514,168 518,168 529,168 529,180 534,206 546,220 565,234 565,240 546,246 546,290 527,297 527,320 497,330 472,338 441,350 430,353 428,340 414,331 348,352 338,358 337,350 318,318 316,290 307,250 303,243 304,225 303,194 300,195.5 299,178 320,177.5 340,183 362,184 361,173 366,166 373,152 377,135 379,118 373.5,118" fill="#2a211f" />
<polygon points="379,117 377,135 373,152 366,166 361,173 362,182 380,190 412,192 412,182 400,170 392,152 388,135 386,118" fill="#261e1c" />
<polygon points="375,148.5 384,147 385,153 375.5,154" fill="#30261f" />
<polygon points="370,159.5 390,158 391,165 370.5,166" fill="#30261f" />
<polygon points="362,170.5 396,169 397,177 362.5,178" fill="#30261f" />
<polygon points="375.5,153 376.5,148 377.9,148 376.9,153" fill="#5f5237" />
<polygon points="380.5,153 381.5,148 382.9,148 381.9,153" fill="#5f5237" />
<polygon points="370.5,165 371.5,159.5 373.1,159.5 372.1,165" fill="#5f5237" />
<polygon points="385.5,166 386.5,160.5 388.1,160.5 387.1,166" fill="#5f5237" />
<polygon points="363,176.5 364,171 366,171 365,176.5" fill="#5f5237" />
<polygon points="391.5,178 392.5,173 394.9,173 393.9,178" fill="#5f5237" />
<path d="M384,116 L476,119 L480,123 Q484,150 518,170 L519,181 L494,182 L480,184 L424,188 L410,185 Q390,158 384,116 Z" fill="#231c1c" />
<clipPath id="c1"><path d="M384,116 L476,119 L480,123 Q484,150 518,170 L519,181 L494,182 L480,184 L424,188 L410,185 Q390,158 384,116 Z"/></clipPath><g clip-path="url(#c1)">
<path d="M387.4,114 C387.9,140 390.9,165.0 407.4,190" fill="none" stroke="#3c3230" stroke-width="7.49"/>
<path d="M397.0,114 C397.5,140 401.0,165.0 418.5,190" fill="none" stroke="#3c3230" stroke-width="7.49"/>
<path d="M406.6,114 C407.1,140 411.1,165.0 429.6,190" fill="none" stroke="#3c3230" stroke-width="7.49"/>
<path d="M416.1,114 C416.6,140 421.1,165.0 440.7,190" fill="none" stroke="#3c3230" stroke-width="7.49"/>
<path d="M425.6,114 C426.1,140 431.1,165.0 451.8,190" fill="none" stroke="#3c3230" stroke-width="7.49"/>
<path d="M435.2,114 C435.7,140 441.2,165.0 462.9,190" fill="none" stroke="#3c3230" stroke-width="7.49"/>
<path d="M444.8,114 C445.2,140 451.2,165.0 474.0,190" fill="none" stroke="#3c3230" stroke-width="7.49"/>
<path d="M454.3,114 C454.8,140 461.3,165.0 485.1,190" fill="none" stroke="#3c3230" stroke-width="7.49"/>
<path d="M463.9,114 C464.4,140 471.4,165.0 496.2,190" fill="none" stroke="#3c3230" stroke-width="7.49"/>
<path d="M473.4,114 C473.9,140 481.4,165.0 507.3,190" fill="none" stroke="#3c3230" stroke-width="7.49"/>
<path d="M482.9,114 C483.4,140 491.4,165.0 518.4,190" fill="none" stroke="#3c3230" stroke-width="7.49"/>
<path d="M492.5,114 C493.0,140 501.5,165.0 529.5,190" fill="none" stroke="#3c3230" stroke-width="7.49"/>
<path d="M502.1,114 C502.6,140 511.6,165.0 540.6,190" fill="none" stroke="#3c3230" stroke-width="7.49"/>
<path d="M387.4,114 C387.9,140 390.9,165.0 407.4,190" fill="none" stroke="#473b39" stroke-width="3.26"/>
<path d="M397.0,114 C397.5,140 401.0,165.0 418.5,190" fill="none" stroke="#473b39" stroke-width="3.26"/>
<path d="M406.6,114 C407.1,140 411.1,165.0 429.6,190" fill="none" stroke="#473b39" stroke-width="3.26"/>
<path d="M416.1,114 C416.6,140 421.1,165.0 440.7,190" fill="none" stroke="#473b39" stroke-width="3.26"/>
<path d="M425.6,114 C426.1,140 431.1,165.0 451.8,190" fill="none" stroke="#473b39" stroke-width="3.26"/>
<path d="M435.2,114 C435.7,140 441.2,165.0 462.9,190" fill="none" stroke="#473b39" stroke-width="3.26"/>
<path d="M444.8,114 C445.2,140 451.2,165.0 474.0,190" fill="none" stroke="#473b39" stroke-width="3.26"/>
<path d="M454.3,114 C454.8,140 461.3,165.0 485.1,190" fill="none" stroke="#473b39" stroke-width="3.26"/>
<path d="M463.9,114 C464.4,140 471.4,165.0 496.2,190" fill="none" stroke="#473b39" stroke-width="3.26"/>
<path d="M473.4,114 C473.9,140 481.4,165.0 507.3,190" fill="none" stroke="#473b39" stroke-width="3.26"/>
<path d="M482.9,114 C483.4,140 491.4,165.0 518.4,190" fill="none" stroke="#473b39" stroke-width="3.26"/>
<path d="M492.5,114 C493.0,140 501.5,165.0 529.5,190" fill="none" stroke="#473b39" stroke-width="3.26"/>
<path d="M502.1,114 C502.6,140 511.6,165.0 540.6,190" fill="none" stroke="#473b39" stroke-width="3.26"/>
</g>
<path d="M380,117 L392,118 Q393,156 415,183 L411,190 Q386,160 380,117 Z" fill="#2d2524" />
<path d="M475,121 L488,122 Q490,148 519,170 L518,177 Q481,154 475,121 Z" fill="#2d2524" />
<path d="M484,123 Q487,148 517,169" fill="none" stroke="#3a2f2d" stroke-width="1.6" />
<path d="M388,119 Q390,156 412,183" fill="none" stroke="#3a2f2d" stroke-width="1.6" />
<path d="M390,103.5 Q402,110 420,112 L472,113.5 L476,112 L476,121 L420,119.5 Q402,119 390,118 Z" fill="#2d2524" />
<path d="M392,108 Q404,114 422,115.5 L474,117" fill="none" stroke="#3b302e" stroke-width="1.5" />
<polygon points="372.5,100.5 391,103 391.5,117.5 373.5,118" fill="#2f2725" />
<polygon points="372.3,100.5 374.3,100.8 375,117.8 373.2,118" fill="#6f6040" />
<polygon points="476,109.8 489,110.3 489,122.5 476,122.5" fill="#2b2323" />
<polygon points="473.5,109.5 478,109.7 478,111.3 473.5,111.3" fill="#77663f" />
<polygon points="303,194 309,194 313,230 322,262 330,284 337,292 337,350 318,318 316,290 307,250 304,225" fill="#261e1c" />
<polygon points="316,262 336,292 337,350 318,316" fill="#2c221d" />
<polygon points="320,272 322,275 323,322 321,318" fill="#3a2c25" />
<polygon points="325,280 327,283 328,331 326,327" fill="#3a2c25" />
<polygon points="330,288 332,291 333,340 331,336" fill="#3a2c25" />
<polygon points="304,224 312,226 313,244 303,243" fill="#2a201c" />
<polygon points="392,190 452,186 452,262 418,272 412,270 400,240" fill="#2a2022" />
<path d="M395.2,188 L395.2,262" stroke="#3f3331" stroke-width="5.4"/>
<path d="M395.2,188 L395.2,262" stroke="#473b39" stroke-width="2.6"/>
<path d="M404.8,188 L404.8,262" stroke="#3f3331" stroke-width="5.4"/>
<path d="M404.8,188 L404.8,262" stroke="#473b39" stroke-width="2.6"/>
<path d="M424.0,188 L424.0,262" stroke="#3f3331" stroke-width="5.4"/>
<path d="M424.0,188 L424.0,262" stroke="#473b39" stroke-width="2.6"/>
<path d="M433.6,188 L433.6,262" stroke="#3f3331" stroke-width="5.4"/>
<path d="M433.6,188 L433.6,262" stroke="#473b39" stroke-width="2.6"/>
<path d="M443.2,188 L443.2,262" stroke="#3f3331" stroke-width="5.4"/>
<path d="M443.2,188 L443.2,262" stroke="#473b39" stroke-width="2.6"/>
<path d="M452.8,188 L452.8,262" stroke="#3f3331" stroke-width="5.4"/>
<path d="M452.8,188 L452.8,262" stroke="#473b39" stroke-width="2.6"/>
<path d="M318,190 L395,191 Q397,228 408,254 L415,272 L342,288 L330,283 Q314,250 311,194 Z" fill="#231c1c" />
<clipPath id="c2"><path d="M318,190 L395,191 Q397,228 408,254 L415,272 L342,288 L330,283 Q314,250 311,194 Z"/></clipPath><g clip-path="url(#c2)">
<path d="M315.7,186 C316.2,222 326.7,258 338.7,286 L344.7,296" fill="none" stroke="#3c3230" stroke-width="9.83"/>
<path d="M327.7,186 C328.2,222 340.7,258 352.7,286 L358.7,296" fill="none" stroke="#3c3230" stroke-width="9.83"/>
<path d="M339.7,186 C340.2,222 354.7,258 366.7,286 L372.7,296" fill="none" stroke="#3c3230" stroke-width="9.83"/>
<path d="M351.7,186 C352.2,222 368.7,258 380.7,286 L386.7,296" fill="none" stroke="#3c3230" stroke-width="9.83"/>
<path d="M363.7,186 C364.2,222 382.7,258 394.7,286 L400.7,296" fill="none" stroke="#3c3230" stroke-width="9.83"/>
<path d="M375.7,186 C376.2,222 396.7,258 408.7,286 L414.7,296" fill="none" stroke="#3c3230" stroke-width="9.83"/>
<path d="M387.7,186 C388.2,222 410.7,258 422.7,286 L428.7,296" fill="none" stroke="#3c3230" stroke-width="9.83"/>
<path d="M399.7,186 C400.2,222 424.7,258 436.7,286 L442.7,296" fill="none" stroke="#3c3230" stroke-width="9.83"/>
<path d="M411.7,186 C412.2,222 438.7,258 450.7,286 L456.7,296" fill="none" stroke="#3c3230" stroke-width="9.83"/>
<path d="M315.7,186 C316.2,222 326.7,258 338.7,286 L344.7,296" fill="none" stroke="#473b39" stroke-width="4.28"/>
<path d="M327.7,186 C328.2,222 340.7,258 352.7,286 L358.7,296" fill="none" stroke="#473b39" stroke-width="4.28"/>
<path d="M339.7,186 C340.2,222 354.7,258 366.7,286 L372.7,296" fill="none" stroke="#473b39" stroke-width="4.28"/>
<path d="M351.7,186 C352.2,222 368.7,258 380.7,286 L386.7,296" fill="none" stroke="#473b39" stroke-width="4.28"/>
<path d="M363.7,186 C364.2,222 382.7,258 394.7,286 L400.7,296" fill="none" stroke="#473b39" stroke-width="4.28"/>
<path d="M375.7,186 C376.2,222 396.7,258 408.7,286 L414.7,296" fill="none" stroke="#473b39" stroke-width="4.28"/>
<path d="M387.7,186 C388.2,222 410.7,258 422.7,286 L428.7,296" fill="none" stroke="#473b39" stroke-width="4.28"/>
<path d="M399.7,186 C400.2,222 424.7,258 436.7,286 L442.7,296" fill="none" stroke="#473b39" stroke-width="4.28"/>
<path d="M411.7,186 C412.2,222 438.7,258 450.7,286 L456.7,296" fill="none" stroke="#473b39" stroke-width="4.28"/>
</g>
<path d="M308,194 L322,193 Q323,245 344,284 L330,286 Q310,248 308,194 Z" fill="#2e2625" />
<path d="M318,195 Q319,246 339,285" fill="none" stroke="#3b302e" stroke-width="1.8" />
<path d="M320,179.5 Q340,184 370,184.5 L412,183.5 L412,192.5 L370,192.5 Q340,193 320,193.5 Z" fill="#2c2423" />
<path d="M322,184 Q342,188.500 372,188.500 L410,188" fill="none" stroke="#3a2f2d" stroke-width="1.6" />
<polygon points="299,178 320,177.5 321,194.5 300,195.5" fill="#2f2725" />
<polygon points="298.8,178 300.8,178 301.8,195.5 299.8,195.5" fill="#6f6040" />
<path d="M342,288 L414,272 L414,331 L348,352 L338,352 L337,292 Z" fill="#1c1613" />
<clipPath id="c3"><path d="M342,288 L414,272 L414,331 L348,352 L338,352 L337,292 Z"/></clipPath><g clip-path="url(#c3)">
<path d="M345.3,268 L345.3,356" fill="none" stroke="#382d27" stroke-width="10.22"/>
<path d="M358.4,268 L358.4,356" fill="none" stroke="#382d27" stroke-width="10.22"/>
<path d="M371.5,268 L371.5,356" fill="none" stroke="#382d27" stroke-width="10.22"/>
<path d="M384.6,268 L384.6,356" fill="none" stroke="#382d27" stroke-width="10.22"/>
<path d="M397.7,268 L397.7,356" fill="none" stroke="#382d27" stroke-width="10.22"/>
<path d="M410.8,268 L410.8,356" fill="none" stroke="#382d27" stroke-width="10.22"/>
<path d="M423.9,268 L423.9,356" fill="none" stroke="#382d27" stroke-width="10.22"/>
<path d="M345.3,268 L345.3,356" fill="none" stroke="#43372f" stroke-width="4.45"/>
<path d="M358.4,268 L358.4,356" fill="none" stroke="#43372f" stroke-width="4.45"/>
<path d="M371.5,268 L371.5,356" fill="none" stroke="#43372f" stroke-width="4.45"/>
<path d="M384.6,268 L384.6,356" fill="none" stroke="#43372f" stroke-width="4.45"/>
<path d="M397.7,268 L397.7,356" fill="none" stroke="#43372f" stroke-width="4.45"/>
<path d="M410.8,268 L410.8,356" fill="none" stroke="#43372f" stroke-width="4.45"/>
<path d="M423.9,268 L423.9,356" fill="none" stroke="#43372f" stroke-width="4.45"/>
<polygon points="336,346 414,324 414,332 336,356" fill="#2b201a" opacity="0.9"/>
</g>
<polygon points="336,292 347.5,291 348.5,357 338,358" fill="#32261f" />
<polygon points="337,334 347.5,332.3 347.5,335.5 337,337.2" fill="#5f5237" />
<polygon points="337.5,349.5 348.5,347.5 348.5,354.5 338,357" fill="#5f5237" />
<polygon points="328,282 342,284 342.5,292.5 329,290.5" fill="#746542" />
<polygon points="342,284.5 396,270 414,270.5 414,276.5 398,276 342.5,289.5" fill="#6b5d3d" />
<polygon points="410,193 419,193 420,262 411,262" fill="#2a201d" />
<polygon points="410.5,240 419.5,239 419.5,241.5 410.5,242.5" fill="#5a4d33" />
<polygon points="410.5,249 419.5,248 419.5,251 410.5,252" fill="#5a4d33" />
<path d="M450,185 L496,183 L498,198 A84,94 0 0 1 416,286 L414,228 A38,42 0 0 0 450,185 Z" fill="#231c1c" />
<clipPath id="c4"><path d="M450,185 L496,183 L498,198 A84,94 0 0 1 416,286 L414,228 A38,42 0 0 0 450,185 Z"/></clipPath><g clip-path="url(#c4)">
<path d="M486.5,182.0 L486.5,194.0 A74.5,84.0 0 0 1 408.0,278.0" fill="none" stroke="#3c3230" stroke-width="5.30"/>
<path d="M479.9,182.0 L479.9,194.0 A67.9,76.6 0 0 1 408.0,270.6" fill="none" stroke="#3c3230" stroke-width="5.30"/>
<path d="M473.3,182.0 L473.3,194.0 A61.3,69.2 0 0 1 408.0,263.2" fill="none" stroke="#3c3230" stroke-width="5.30"/>
<path d="M466.7,182.0 L466.7,194.0 A54.7,61.8 0 0 1 408.0,255.8" fill="none" stroke="#3c3230" stroke-width="5.30"/>
<path d="M460.1,182.0 L460.1,194.0 A48.1,54.4 0 0 1 408.0,248.4" fill="none" stroke="#3c3230" stroke-width="5.30"/>
<path d="M453.5,182.0 L453.5,194.0 A41.5,47.0 0 0 1 408.0,241.0" fill="none" stroke="#3c3230" stroke-width="5.30"/>
<path d="M446.9,182.0 L446.9,194.0 A34.9,39.6 0 0 1 408.0,233.6" fill="none" stroke="#3c3230" stroke-width="5.30"/>
<path d="M486.5,182.0 L486.5,194.0 A74.5,84.0 0 0 1 408.0,278.0" fill="none" stroke="#473b39" stroke-width="2.31"/>
<path d="M479.9,182.0 L479.9,194.0 A67.9,76.6 0 0 1 408.0,270.6" fill="none" stroke="#473b39" stroke-width="2.31"/>
<path d="M473.3,182.0 L473.3,194.0 A61.3,69.2 0 0 1 408.0,263.2" fill="none" stroke="#473b39" stroke-width="2.31"/>
<path d="M466.7,182.0 L466.7,194.0 A54.7,61.8 0 0 1 408.0,255.8" fill="none" stroke="#473b39" stroke-width="2.31"/>
<path d="M460.1,182.0 L460.1,194.0 A48.1,54.4 0 0 1 408.0,248.4" fill="none" stroke="#473b39" stroke-width="2.31"/>
<path d="M453.5,182.0 L453.5,194.0 A41.5,47.0 0 0 1 408.0,241.0" fill="none" stroke="#473b39" stroke-width="2.31"/>
<path d="M446.9,182.0 L446.9,194.0 A34.9,39.6 0 0 1 408.0,233.6" fill="none" stroke="#473b39" stroke-width="2.31"/>
</g>
<path d="M494.5,194 L494.5,200 A82,90 0 0 1 416,283" fill="none" stroke="#2b2322" stroke-width="7.5"/>
<path d="M492,200 A80,87 0 0 1 416,280" fill="none" stroke="#3a2f2d" stroke-width="1.4"/>
<path d="M493,181 L529,178 Q534,212 564,234 L564,240 L534,247 L498,230 L494,200 Z" fill="#231c1c" />
<clipPath id="c5"><path d="M493,181 L529,178 Q534,212 564,234 L564,240 L534,247 L498,230 L494,200 Z"/></clipPath><g clip-path="url(#c5)">
<path d="M522.0,176 C524.0,200 536.0,224.0 561.0,244.0" fill="none" stroke="#3c3230" stroke-width="4.99"/>
<path d="M517.2,176 C518.9,200 529.6,224.0 553.6,244.0" fill="none" stroke="#3c3230" stroke-width="4.99"/>
<path d="M512.4,176 C513.8,200 523.2,224.0 546.3,244.0" fill="none" stroke="#3c3230" stroke-width="4.99"/>
<path d="M507.6,176 C508.6,200 516.8,224.0 538.9,244.0" fill="none" stroke="#3c3230" stroke-width="4.99"/>
<path d="M502.8,176 C503.5,200 510.4,224.0 531.6,244.0" fill="none" stroke="#3c3230" stroke-width="4.99"/>
<path d="M498.0,176 C498.4,200 504.0,224.0 524.2,244.0" fill="none" stroke="#3c3230" stroke-width="4.99"/>
<path d="M493.2,176 C493.3,200 497.6,224.0 516.8,244.0" fill="none" stroke="#3c3230" stroke-width="4.99"/>
<path d="M488.4,176 C488.2,200 491.2,224.0 509.5,244.0" fill="none" stroke="#3c3230" stroke-width="4.99"/>
<path d="M522.0,176 C524.0,200 536.0,224.0 561.0,244.0" fill="none" stroke="#473b39" stroke-width="2.18"/>
<path d="M517.2,176 C518.9,200 529.6,224.0 553.6,244.0" fill="none" stroke="#473b39" stroke-width="2.18"/>
<path d="M512.4,176 C513.8,200 523.2,224.0 546.3,244.0" fill="none" stroke="#473b39" stroke-width="2.18"/>
<path d="M507.6,176 C508.6,200 516.8,224.0 538.9,244.0" fill="none" stroke="#473b39" stroke-width="2.18"/>
<path d="M502.8,176 C503.5,200 510.4,224.0 531.6,244.0" fill="none" stroke="#473b39" stroke-width="2.18"/>
<path d="M498.0,176 C498.4,200 504.0,224.0 524.2,244.0" fill="none" stroke="#473b39" stroke-width="2.18"/>
<path d="M493.2,176 C493.3,200 497.6,224.0 516.8,244.0" fill="none" stroke="#473b39" stroke-width="2.18"/>
<path d="M488.4,176 C488.2,200 491.2,224.0 509.5,244.0" fill="none" stroke="#473b39" stroke-width="2.18"/>
</g>
<path d="M522,183 L530,181 Q535,212 565,234 L562,238 Q530,216 522,183 Z" fill="#2c2423" />
<polygon points="533,241.5 557,235.5 558,239 534,245.5" fill="#6b5d3d" />
<polygon points="557,234 564,233 565,240 558,241" fill="#746542" />
<polygon points="412,182 423.5,182.5 424,193 412.5,192.5" fill="#746542" />
<polygon points="423.5,183.5 480,180 481,183.5 424,187.5" fill="#6b5d3d" />
<polygon points="494,181 503,179 504,196 495.5,198" fill="#746542" />
<polygon points="503,178.5 515.5,178 515.5,182.5 503.5,183.5" fill="#6b5d3d" />
<polygon points="518.5,168 529,168 529,179 518.5,179" fill="#2b2323" />
<polygon points="515,176.5 524,176 524.5,185.5 515.5,186" fill="#746542" />
<polygon points="498,226 536,246 546,250 546,292 527,298 527,320 497,330 472,338 441,350 430,352 428,330 414,331 414,286 424,286 468,250" fill="#2c221d" />
<clipPath id="c6"><path d="M428,286 L470,262 L470,342 L440,351 L429,352 Z"/></clipPath><g clip-path="url(#c6)">
<path d="M428,286 L470,262 L470,342 L440,351 L429,352 Z" fill="#1c1613" />
<path d="M435.0,255 L435.0,356" fill="none" stroke="#382d27" stroke-width="7.41"/>
<path d="M444.5,255 L444.5,356" fill="none" stroke="#382d27" stroke-width="7.41"/>
<path d="M454.0,255 L454.0,356" fill="none" stroke="#382d27" stroke-width="7.41"/>
<path d="M463.5,255 L463.5,356" fill="none" stroke="#382d27" stroke-width="7.41"/>
<path d="M473.0,255 L473.0,356" fill="none" stroke="#382d27" stroke-width="7.41"/>
<path d="M435.0,255 L435.0,356" fill="none" stroke="#43372f" stroke-width="3.23"/>
<path d="M444.5,255 L444.5,356" fill="none" stroke="#43372f" stroke-width="3.23"/>
<path d="M454.0,255 L454.0,356" fill="none" stroke="#43372f" stroke-width="3.23"/>
<path d="M463.5,255 L463.5,356" fill="none" stroke="#43372f" stroke-width="3.23"/>
<path d="M473.0,255 L473.0,356" fill="none" stroke="#43372f" stroke-width="3.23"/>
</g>
<polygon points="414,286 428,292 429,340 414,331" fill="#2a1f1b" />
<path d="M417.5,288 L417.5,336" stroke="#3a2e28" stroke-width="2.6"/>
<path d="M422,288 L422,336" stroke="#3a2e28" stroke-width="2.6"/>
<path d="M426,288 L426,336" stroke="#3a2e28" stroke-width="2.6"/>
<polygon points="470,250 498,228 530,250 520,258 476,266" fill="#2e231e" />
<path d="M478,246 L520,240" stroke="#43342b" stroke-width="3"/>
<path d="M478,254 L520,248" stroke="#3d2f28" stroke-width="3"/>
<path d="M478,262 L520,256" stroke="#43342b" stroke-width="3"/>
<polygon points="466,270 502,262 503,328 467,340" fill="#2e221c" />
<polygon points="473,284 495,279 495,326 473,334" fill="#1d1716" />
<path d="M478,290 L494,297" stroke="#372b26" stroke-width="2.6"/>
<path d="M478,297 L494,304" stroke="#372b26" stroke-width="2.6"/>
<path d="M478,304 L494,311" stroke="#372b26" stroke-width="2.6"/>
<path d="M478,311 L494,318" stroke="#372b26" stroke-width="2.6"/>
<path d="M478,318 L494,325" stroke="#372b26" stroke-width="2.6"/>
<polygon points="473,326 495,322 495,327 474,334" fill="#2a2322" />
<polygon points="494,270 501,268 502,328 495,331" fill="#31251e" />
<clipPath id="c7"><path d="M502,262 L527,256 L527,320 L503,328 Z"/></clipPath><g clip-path="url(#c7)">
<path d="M502,262 L527,256 L527,320 L503,328 Z" fill="#1c1613" />
<path d="M508.5,250 L508.5,332" fill="none" stroke="#382d27" stroke-width="6.63"/>
<path d="M517.0,250 L517.0,332" fill="none" stroke="#382d27" stroke-width="6.63"/>
<path d="M525.5,250 L525.5,332" fill="none" stroke="#382d27" stroke-width="6.63"/>
<path d="M508.5,250 L508.5,332" fill="none" stroke="#43372f" stroke-width="2.89"/>
<path d="M517.0,250 L517.0,332" fill="none" stroke="#43372f" stroke-width="2.89"/>
<path d="M525.5,250 L525.5,332" fill="none" stroke="#43372f" stroke-width="2.89"/>
</g>
<polygon points="520,256 527,255 527,320 521,322" fill="#2d211c" />
<polygon points="520,300 527.5,298.5 527.5,301.5 520,303" fill="#5f5237" />
<polygon points="520,313 527.5,311 527.5,316 520,318" fill="#5f5237" />
<clipPath id="c8"><path d="M527,250 L546,246 L546,291 L527,298 Z"/></clipPath><g clip-path="url(#c8)">
<path d="M527,250 L546,246 L546,291 L527,298 Z" fill="#35271f" />
<path d="M531.0,244 L531.0,300" stroke="#1c1613" stroke-width="2.6"/>
<path d="M538.5,244 L538.5,300" stroke="#1c1613" stroke-width="2.6"/>
</g>
<polygon points="541,274 546.5,273 546.5,275.5 541,276.5" fill="#5f5237" />
<polygon points="541,284 546.5,283 546.5,287 541,288" fill="#5f5237" />
<polygon points="428,316 440,314 441,350 429,352" fill="#32261f" />
<polygon points="428,329.5 440,328 440,331 428,332.5" fill="#5f5237" />
<polygon points="428,344 441,342.5 441,349 429,351.5" fill="#5f5237" />
<polygon points="409.7,270.5 415,270 421,286 416,288" fill="#6b5d3d" />
<polygon points="470.5,257 476.5,249.5 478.5,251.5 472.5,259" fill="#6b5d3d" />
<polygon points="451,274 461.5,266 463.5,268.5 453,276.5" fill="#6b5d3d" />
<polygon points="462.5,276 466,275.5 467,286.5 463.5,287" fill="#6b5d3d" />
<polygon points="435,280 441,279 441,281.5 435,282.5" fill="#6b5d3d" />
<polygon points="482.5,240 487,231.5 489.5,233 485,241.5" fill="#6b5d3d" />
<polygon points="498.5,230.5 501,230 504.5,237 502,238" fill="#6b5d3d" />
<polygon points="509,243 511,242 516,247.5 514,249" fill="#6b5d3d" />
<polygon points="522,252 524,251 531,257 529,259" fill="#6b5d3d" />
<polygon points="412,313 416.5,312.5 416.5,315 412,315.5" fill="#6b5d3d" />
<polygon points="412,324 417,323.5 417,329.5 412,330" fill="#6b5d3d" />
</g>
</svg>
<div class="b " style="left:187px;top:374.2px;width:497px;height:1.5px;background:#f6f6f6;"></div>
<div class="b " style="left:187px;top:376px;width:497px;height:9px;background:#5f5f5f;"></div>
<span class="t" style="left:188.5px;top:376.84px;font-size:5.35px;line-height:8.68px;color:#cfcfcf;font-weight:bold;">Motions</span>
<div class="b " style="left:187px;top:385px;width:497px;height:46px;background:#fff;border-left:0.7px solid #d8d8d8;border-right:0.7px solid #d8d8d8"></div>
<div class="b " style="left:187px;top:431px;width:497px;height:0.8px;background:#d0d0d0;"></div>
<div class="b " style="left:686.3px;top:14px;width:111.4px;height:9px;background:#5f5f5f;"></div>
<span class="t" style="left:688px;top:14.78px;font-size:5.52px;line-height:8.68px;color:#cfcfcf;font-weight:bold;">Rendering Stamp Settings</span>
<div class="b " style="left:686.3px;top:23.2px;width:111.4px;height:8.3px;background:#c88f06;"></div>
<span class="t" style="left:688.2px;top:22.61px;font-size:6.00px;line-height:8.68px;color:#f3e6c4;">Name</span>
<div class="b " style="left:686.3px;top:32.2px;width:111.4px;height:7.5px;background:#f8f3d8;"></div>
<div class="b " style="left:686.3px;top:39.7px;width:111.4px;height:0.8px;background:#bdbdbd;"></div>
<span class="t" style="left:687.7px;top:31.65px;font-size:6.10px;line-height:8.54px;color:#1e1e1e;letter-spacing:0.021px;">chalet-building-04</span>
<svg style="left:790.500px;top:33px" width="6" height="6" viewBox="0 0 12 12"><path d="M2 10l1-3 5-5 2.500 2.500-5 5z" fill="#999"/><path d="M1.500 11l1-3 2 2z" fill="#777"/></svg>
<div class="b " style="left:686.5px;top:41px;width:103.5px;height:390.5px;background:#f2efe2;"></div>
<div class="b " style="left:790px;top:41px;width:7.7px;height:390px;background:#f0f0f0;"></div>
<div class="b " style="left:794px;top:47px;width:0.8px;height:230.5px;background:#6e6e6e;"></div>
<div class="b " style="left:687px;top:41.2px;width:102.5px;height:11.5px;background:#c88f06;"></div>
<svg style="left:688.700px;top:44.40px" width="5.400" height="5.400" viewBox="0 0 12 12"><circle cx="6" cy="6" r="6" fill="#f7ecd0"/><path d="M2.800 4.800L6 8.300l3.200-3.500" stroke="#c88f06" stroke-width="1.900" fill="none"/></svg>
<span class="t" style="left:696px;top:42.65px;font-size:6.10px;line-height:8.54px;color:#f6ecd0;letter-spacing:0.146px;">Basic</span>
<div class="b " style="left:687px;top:54px;width:102.5px;height:8.5px;background:#e9e9e9;border-bottom:0.7px solid #d9d9d9"></div>
<div class="b " style="left:727.3000000000001px;top:54px;width:0.7px;height:8.5px;background:#d6d6d6;"></div>
<span class="t" style="left:688px;top:54.74px;font-size:5.82px;line-height:8.54px;color:#b5b5b5;">Graphic Name</span>
<span class="t" style="left:729.3px;top:54.65px;font-size:6.08px;line-height:8.54px;color:#b9b9b9;">chalet-building-04</span>
<div class="b " style="left:687px;top:62.5px;width:102.5px;height:56px;background:#f5efd3;border-bottom:0.7px solid #d8d4bd"></div>
<div class="b " style="left:727.3000000000001px;top:62.5px;width:0.7px;height:56px;background:#d3d0bb;"></div>
<span class="t" style="left:688px;top:86.78px;font-size:5.71px;line-height:8.54px;color:#1e1e1e;">Graphic</span>
<div class="b " style="left:727.9px;top:63.9px;width:53.2px;height:53px;background:#4c4d4f;"></div>
<svg style="left:727.9px;top:63.9px" width="53.2" height="53" viewBox="0 0 53.2 53"><defs><filter id="tb" x="-10%" y="-10%" width="120%" height="120%"><feGaussianBlur stdDeviation="0.5"/></filter></defs><g filter="url(#tb)"><path d="M9,31.9L12.2,28.4L16.7,25.8L16.1,22.6L19.9,19.4L21.9,17.4L32.8,14.9L35.4,21.3L39.3,20.7L43.2,29L44.8,31.9L42.5,36.1L40.6,39.4L36.1,42.6L31.6,41.9L30.3,43.9L25.7,44.5L25.1,45.8L17.4,46.1L11.6,41.9L10.3,36.8Z" fill="#45322b"/><path d="M21.900,17.400L32.800,14.900L35.400,21.300L36,30L25,32Z" fill="#4d3830"/><path d="M10.300,36.800L17.400,46.100L25.100,45.800L25,33L12,32Z" fill="#49352d"/><path d="M36,22L43,29.500L42,36L36.500,41.500Z" fill="#3d2c26"/><path d="M17,24L24,31M20,21L27,29M13,30L18,35M29,17L33,27M38,23L41,34" stroke="#33241f" stroke-width="0.8" fill="none"/><path d="M24.500,30.500L35.500,27.500M17.500,39.500L24,37.500M39.500,33.500L44,32.500M33,14.500L34,16.500M12,29L15,27.500" stroke="#8f7b55" stroke-width="0.85" fill="none"/><path d="M30.500,39L32,38.600L32.200,42.200L30.700,42.600Z" fill="#1d1512"/></g></svg>
<div class="b " style="left:778.3px;top:97.7px;width:11.4px;height:12px;background:#fff;border-radius:1.2px"></div>
<svg style="left:778.300px;top:97.70px" width="11.400" height="12" viewBox="0 0 12 12"><path d="M1.400 5.400L3.900 2.300h2.200v6.200H1.400z" fill="#e6e6e6" stroke="#3a3a3a" stroke-width=".9" stroke-linejoin="round"/><path d="M2.800 5.200h2M2.800 6.800h2" stroke="#555" stroke-width=".6"/><path d="M7.700 1.500v7q0 1.600 1.500 1.600 1.500 0 1.500-1.900" fill="none" stroke="#2c2c2c" stroke-width="1.800"/></svg>
<svg style="left:784px;top:111.70px" width="5.400" height="5" viewBox="0 0 11 10"><path d="M1 5h8.500M6 1.500L9.500 5 6 8.500" stroke="#aaa" stroke-width="1.300" fill="none"/></svg>
<div class="b " style="left:687px;top:118.5px;width:102.5px;height:8.333px;background:#f5efd3;border-bottom:0.7px solid #d8d4bd"></div>
<div class="b " style="left:727.3000000000001px;top:118.5px;width:0.7px;height:8.333px;background:#d3d0bb;"></div>
<span class="t" style="left:688px;top:118.74px;font-size:5.83px;line-height:8.54px;color:#1e1e1e;">Subgraphic</span>
<div class="b " style="left:729.5px;top:119.8px;width:13.5px;height:6px;background:#5c5c5c;border-radius:3px"></div>
<div class="b " style="left:730.7px;top:120.8px;width:4.2px;height:4.2px;background:#b8b8b8;border-radius:50%"></div>
<div class="b " style="left:687px;top:126.833px;width:102.5px;height:8.333px;background:#f5efd3;border-bottom:0.7px solid #d8d4bd"></div>
<div class="b " style="left:727.3000000000001px;top:126.833px;width:0.7px;height:8.333px;background:#d3d0bb;"></div>
<span class="t" style="left:688px;top:127.66px;font-size:6.06px;line-height:8.54px;color:#1e1e1e;">Accurate C...</span>
<div class="b " style="left:729.5px;top:128.133px;width:13.5px;height:6px;background:#5c5c5c;border-radius:3px"></div>
<div class="b " style="left:730.7px;top:129.133px;width:4.2px;height:4.2px;background:#b8b8b8;border-radius:50%"></div>
<div class="b " style="left:687px;top:135.166px;width:102.5px;height:8.333px;background:#f5efd3;border-bottom:0.7px solid #d8d4bd"></div>
<div class="b " style="left:727.3000000000001px;top:135.166px;width:0.7px;height:8.333px;background:#d3d0bb;"></div>
<span class="t" style="left:688px;top:135.72px;font-size:5.89px;line-height:8.54px;color:#1e1e1e;">Overwrite N...</span>
<div class="b " style="left:729.5px;top:136.466px;width:13.5px;height:6px;background:#5c5c5c;border-radius:3px"></div>
<div class="b " style="left:737.5px;top:137.266px;width:4.6px;height:4.6px;background:#fff;border-radius:50%"></div>
<div class="b " style="left:739.5px;top:138.36599999999999px;width:0.6px;height:2.4px;background:#555;"></div>
<div class="b " style="left:687px;top:143.499px;width:102.5px;height:8.333px;background:#f5efd3;border-bottom:0.7px solid #d8d4bd"></div>
<div class="b " style="left:727.3000000000001px;top:143.499px;width:0.7px;height:8.333px;background:#d3d0bb;"></div>
<span class="t" style="left:688px;top:143.74px;font-size:5.84px;line-height:8.54px;color:#1e1e1e;">Billboarding</span>
<div class="b " style="left:729.5px;top:144.799px;width:13.5px;height:6px;background:#5c5c5c;border-radius:3px"></div>
<div class="b " style="left:730.7px;top:145.799px;width:4.2px;height:4.2px;background:#b8b8b8;border-radius:50%"></div>
<div class="b " style="left:687px;top:152.8px;width:102.5px;height:11.5px;background:#c88f06;"></div>
<svg style="left:688.700px;top:156.00px" width="5.400" height="5.400" viewBox="0 0 12 12"><circle cx="6" cy="6" r="6" fill="#f7ecd0"/><path d="M2.800 4.800L6 8.300l3.200-3.500" stroke="#c88f06" stroke-width="1.900" fill="none"/></svg>
<span class="t" style="left:696px;top:154.78px;font-size:5.72px;line-height:8.54px;color:#f6ecd0;">Simple Collision Settings</span>
<div class="b " style="left:687px;top:165.5px;width:102.5px;height:8.333px;background:#f5efd3;border-bottom:0.7px solid #d8d4bd"></div>
<div class="b " style="left:727.3000000000001px;top:165.5px;width:0.7px;height:8.333px;background:#d3d0bb;"></div>
<span class="t" style="left:688px;top:165.90px;font-size:5.36px;line-height:8.54px;color:#1e1e1e;">Shape</span>
<span class="t" style="left:729.3px;top:165.78px;font-size:5.73px;line-height:8.54px;color:#1e1e1e;">Mesh</span>
<svg style="left:783.600px;top:167.00px" width="5.400" height="5.600" viewBox="0 0 11 11"><rect x=".5" y=".5" width="10" height="10" rx="1.500" fill="#9c9c9c"/><path d="M1.500 1.500L5.500 5.500 9.500 1.500" fill="#f4f0dc" stroke="#f4f0dc" stroke-width="1.200" stroke-linejoin="round"/></svg>
<div class="b " style="left:687px;top:173.833px;width:102.5px;height:8.333px;background:#f5efd3;border-bottom:0.7px solid #d8d4bd"></div>
<div class="b " style="left:727.3000000000001px;top:173.833px;width:0.7px;height:8.333px;background:#d3d0bb;"></div>
<span class="t" style="left:688px;top:174.81px;font-size:5.62px;line-height:8.54px;color:#1e1e1e;">Capsule Axis</span>
<span class="t" style="left:729.3px;top:174.65px;font-size:6.10px;line-height:8.54px;color:#1e1e1e;transform:scaleX(0.9831);">Y</span>
<svg style="left:783.600px;top:175.33px" width="5.400" height="5.600" viewBox="0 0 11 11"><rect x=".5" y=".5" width="10" height="10" rx="1.500" fill="#9c9c9c"/><path d="M1.500 1.500L5.500 5.500 9.500 1.500" fill="#f4f0dc" stroke="#f4f0dc" stroke-width="1.200" stroke-linejoin="round"/></svg>
<div class="b " style="left:687px;top:182.166px;width:102.5px;height:8.333px;background:#e9e9e9;border-bottom:0.7px solid #d9d9d9"></div>
<div class="b " style="left:727.3000000000001px;top:182.166px;width:0.7px;height:8.333px;background:#d6d6d6;"></div>
<span class="t" style="left:688px;top:182.77px;font-size:5.73px;line-height:8.54px;color:#b5b5b5;">Mesh Model...</span>
<span class="t" style="left:729.3px;top:182.65px;font-size:6.10px;line-height:8.54px;color:#b9b9b9;letter-spacing:0.035px;">chalet-building-04-...</span>
<div class="b " style="left:687px;top:190.499px;width:102.5px;height:55.8px;background:#f5efd3;border-bottom:0.7px solid #d8d4bd"></div>
<div class="b " style="left:727.3000000000001px;top:190.499px;width:0.7px;height:55.8px;background:#d3d0bb;"></div>
<span class="t" style="left:688px;top:214.85px;font-size:5.52px;line-height:8.54px;color:#1e1e1e;">Mesh</span>
<div class="b " style="left:727.9px;top:191.9px;width:53.2px;height:53px;background:#4b4b4b;"></div>
<svg style="left:727.9px;top:191.9px" width="53.2" height="53" viewBox="0 0 53.2 53"><path d="M9,31.9L12.2,28.4L16.7,25.8L16.1,22.6L19.9,19.4L21.9,17.4L32.8,14.9L35.4,21.3L39.3,20.7L43.2,29L44.8,31.9L42.5,36.1L40.6,39.4L36.1,42.6L31.6,41.9L30.3,43.9L25.7,44.5L25.1,45.8L17.4,46.1L11.6,41.9L10.3,36.8Z" fill="#fff"/></svg>
<div class="b " style="left:778.3px;top:225.5px;width:11.4px;height:12px;background:#fff;border-radius:1.2px"></div>
<svg style="left:778.300px;top:225.50px" width="11.400" height="12" viewBox="0 0 12 12"><path d="M1.400 5.400L3.900 2.300h2.200v6.200H1.400z" fill="#e6e6e6" stroke="#3a3a3a" stroke-width=".9" stroke-linejoin="round"/><path d="M2.800 5.200h2M2.800 6.800h2" stroke="#555" stroke-width=".6"/><path d="M7.700 1.500v7q0 1.600 1.500 1.600 1.500 0 1.500-1.900" fill="none" stroke="#2c2c2c" stroke-width="1.800"/></svg>
<svg style="left:784px;top:239.70px" width="5.400" height="5" viewBox="0 0 11 10"><path d="M1 5h8.500M6 1.500L9.500 5 6 8.500" stroke="#aaa" stroke-width="1.300" fill="none"/></svg>
<div class="b " style="left:687px;top:246.5px;width:102.5px;height:8.333px;background:#f5efd3;border-bottom:0.7px solid #d8d4bd"></div>
<div class="b " style="left:727.3000000000001px;top:246.5px;width:0.7px;height:8.333px;background:#d3d0bb;"></div>
<span class="t" style="left:688px;top:246.77px;font-size:5.73px;line-height:8.54px;color:#1e1e1e;">Position X</span>
<span class="t" style="left:729.3px;top:246.65px;font-size:6.10px;line-height:8.54px;color:#1e1e1e;transform:scaleX(0.9728);">0</span>
<svg style="left:783.500px;top:247.60px" width="6" height="6" viewBox="0 0 12 12"><circle cx="6" cy="6" r="4.700" fill="#f7f5ec" stroke="#8e8e8e" stroke-width="1.500"/><path d="M3 6h6" stroke="#808080" stroke-width="1.700"/></svg>
<div class="b " style="left:687px;top:254.833px;width:102.5px;height:8.333px;background:#f5efd3;border-bottom:0.7px solid #d8d4bd"></div>
<div class="b " style="left:727.3000000000001px;top:254.833px;width:0.7px;height:8.333px;background:#d3d0bb;"></div>
<span class="t" style="left:688px;top:255.77px;font-size:5.75px;line-height:8.54px;color:#1e1e1e;">Position Y</span>
<span class="t" style="left:729.3px;top:255.65px;font-size:6.10px;line-height:8.54px;color:#1e1e1e;transform:scaleX(0.9728);">0</span>
<svg style="left:783.500px;top:255.93px" width="6" height="6" viewBox="0 0 12 12"><circle cx="6" cy="6" r="4.700" fill="#f7f5ec" stroke="#8e8e8e" stroke-width="1.500"/><path d="M3 6h6" stroke="#808080" stroke-width="1.700"/></svg>
<div class="b " style="left:687px;top:263.166px;width:102.5px;height:8.333px;background:#f5efd3;border-bottom:0.7px solid #d8d4bd"></div>
<div class="b " style="left:727.3000000000001px;top:263.166px;width:0.7px;height:8.333px;background:#d3d0bb;"></div>
<span class="t" style="left:688px;top:263.75px;font-size:5.80px;line-height:8.54px;color:#1e1e1e;">Position Z</span>
<span class="t" style="left:729.3px;top:263.65px;font-size:6.10px;line-height:8.54px;color:#1e1e1e;transform:scaleX(0.9728);">0</span>
<svg style="left:783.500px;top:264.27px" width="6" height="6" viewBox="0 0 12 12"><circle cx="6" cy="6" r="4.700" fill="#f7f5ec" stroke="#8e8e8e" stroke-width="1.500"/><path d="M3 6h6" stroke="#808080" stroke-width="1.700"/></svg>
<div class="b " style="left:687px;top:271.499px;width:102.5px;height:8.333px;background:#f5efd3;border-bottom:0.7px solid #d8d4bd"></div>
<div class="b " style="left:727.3000000000001px;top:271.499px;width:0.7px;height:8.333px;background:#d3d0bb;"></div>
<span class="t" style="left:688px;top:271.76px;font-size:5.78px;line-height:8.54px;color:#1e1e1e;">Rotation X</span>
<span class="t" style="left:729.3px;top:271.65px;font-size:6.10px;line-height:8.54px;color:#1e1e1e;transform:scaleX(0.9728);">0</span>
<svg style="left:783.500px;top:272.60px" width="6" height="6" viewBox="0 0 12 12"><circle cx="6" cy="6" r="4.700" fill="#f7f5ec" stroke="#8e8e8e" stroke-width="1.500"/><path d="M3 6h6" stroke="#808080" stroke-width="1.700"/></svg>
<div class="b " style="left:687px;top:279.83200000000005px;width:102.5px;height:8.333px;background:#f5efd3;border-bottom:0.7px solid #d8d4bd"></div>
<div class="b " style="left:727.3000000000001px;top:279.83200000000005px;width:0.7px;height:8.333px;background:#d3d0bb;"></div>
<span class="t" style="left:688px;top:280.75px;font-size:5.81px;line-height:8.54px;color:#1e1e1e;">Rotation Y</span>
<span class="t" style="left:729.3px;top:280.65px;font-size:6.10px;line-height:8.54px;color:#1e1e1e;transform:scaleX(0.9728);">0</span>
<svg style="left:783.500px;top:280.93px" width="6" height="6" viewBox="0 0 12 12"><circle cx="6" cy="6" r="4.700" fill="#f7f5ec" stroke="#8e8e8e" stroke-width="1.500"/><path d="M3 6h6" stroke="#808080" stroke-width="1.700"/></svg>
<div class="b " style="left:687px;top:288.1650000000001px;width:102.5px;height:8.333px;background:#f5efd3;border-bottom:0.7px solid #d8d4bd"></div>
<div class="b " style="left:727.3000000000001px;top:288.1650000000001px;width:0.7px;height:8.333px;background:#d3d0bb;"></div>
<span class="t" style="left:688px;top:288.73px;font-size:5.85px;line-height:8.54px;color:#1e1e1e;">Rotation Z</span>
<span class="t" style="left:729.3px;top:288.65px;font-size:6.10px;line-height:8.54px;color:#1e1e1e;transform:scaleX(0.9728);">0</span>
<svg style="left:783.500px;top:289.27px" width="6" height="6" viewBox="0 0 12 12"><circle cx="6" cy="6" r="4.700" fill="#f7f5ec" stroke="#8e8e8e" stroke-width="1.500"/><path d="M3 6h6" stroke="#808080" stroke-width="1.700"/></svg>
<div class="b " style="left:687px;top:296.4980000000001px;width:102.5px;height:8.333px;background:#f5efd3;border-bottom:0.7px solid #d8d4bd"></div>
<div class="b " style="left:727.3000000000001px;top:296.4980000000001px;width:0.7px;height:8.333px;background:#d3d0bb;"></div>
<span class="t" style="left:688px;top:296.90px;font-size:5.36px;line-height:8.54px;color:#1e1e1e;">Size X</span>
<span class="t" style="left:729.3px;top:296.65px;font-size:6.10px;line-height:8.54px;color:#1e1e1e;transform:scaleX(0.8254);">1</span>
<svg style="left:783.500px;top:297.60px" width="6" height="6" viewBox="0 0 12 12"><circle cx="6" cy="6" r="4.700" fill="#f7f5ec" stroke="#8e8e8e" stroke-width="1.500"/><path d="M3 6h6" stroke="#808080" stroke-width="1.700"/></svg>
<div class="b " style="left:687px;top:304.83100000000013px;width:102.5px;height:8.333px;background:#f5efd3;border-bottom:0.7px solid #d8d4bd"></div>
<div class="b " style="left:727.3000000000001px;top:304.83100000000013px;width:0.7px;height:8.333px;background:#d3d0bb;"></div>
<span class="t" style="left:688px;top:305.89px;font-size:5.40px;line-height:8.54px;color:#1e1e1e;">Size Y</span>
<span class="t" style="left:729.3px;top:305.65px;font-size:6.10px;line-height:8.54px;color:#1e1e1e;transform:scaleX(0.8254);">1</span>
<svg style="left:783.500px;top:305.93px" width="6" height="6" viewBox="0 0 12 12"><circle cx="6" cy="6" r="4.700" fill="#f7f5ec" stroke="#8e8e8e" stroke-width="1.500"/><path d="M3 6h6" stroke="#808080" stroke-width="1.700"/></svg>
<div class="b " style="left:687px;top:313.16400000000016px;width:102.5px;height:8.333px;background:#f5efd3;border-bottom:0.7px solid #d8d4bd"></div>
<div class="b " style="left:727.3000000000001px;top:313.16400000000016px;width:0.7px;height:8.333px;background:#d3d0bb;"></div>
<span class="t" style="left:688px;top:313.86px;font-size:5.47px;line-height:8.54px;color:#1e1e1e;">Size Z</span>
<span class="t" style="left:729.3px;top:313.65px;font-size:6.10px;line-height:8.54px;color:#1e1e1e;transform:scaleX(0.8254);">1</span>
<svg style="left:783.500px;top:314.26px" width="6" height="6" viewBox="0 0 12 12"><circle cx="6" cy="6" r="4.700" fill="#f7f5ec" stroke="#8e8e8e" stroke-width="1.500"/><path d="M3 6h6" stroke="#808080" stroke-width="1.700"/></svg>
<div class="b " style="left:687px;top:321.4970000000002px;width:102.5px;height:8.333px;background:#f5efd3;border-bottom:0.7px solid #d8d4bd"></div>
<div class="b " style="left:727.3000000000001px;top:321.4970000000002px;width:0.7px;height:8.333px;background:#d3d0bb;"></div>
<span class="t" style="left:688px;top:321.68px;font-size:6.00px;line-height:8.54px;color:#1e1e1e;">Terrain Assi...</span>
<span class="t" style="left:729.3px;top:321.73px;font-size:5.86px;line-height:8.54px;color:#1e1e1e;">None</span>
<svg style="left:783.600px;top:323.00px" width="5.400" height="5.600" viewBox="0 0 11 11"><rect x=".5" y=".5" width="10" height="10" rx="1.500" fill="#9c9c9c"/><path d="M1.500 1.500L5.500 5.500 9.500 1.500" fill="#f4f0dc" stroke="#f4f0dc" stroke-width="1.200" stroke-linejoin="round"/></svg>
<div class="b " style="left:687px;top:330.5px;width:102.5px;height:11.5px;background:#c88f06;"></div>
<svg style="left:688.700px;top:333.70px" width="5.400" height="5.400" viewBox="0 0 12 12"><circle cx="6" cy="6" r="6" fill="#f7ecd0"/><path d="M2.800 4.800L6 8.300l3.200-3.500" stroke="#c88f06" stroke-width="1.900" fill="none"/></svg>
<span class="t" style="left:696px;top:332.67px;font-size:6.02px;line-height:8.54px;color:#f6ecd0;">Motion Setting</span>
<div class="b " style="left:687px;top:343.3px;width:102.5px;height:8.4px;background:#e9e9e9;border-bottom:0.7px solid #d9d9d9"></div>
<div class="b " style="left:727.3000000000001px;top:343.3px;width:0.7px;height:8.4px;background:#d6d6d6;"></div>
<span class="t" style="left:688px;top:343.69px;font-size:5.97px;line-height:8.54px;color:#b5b5b5;">Motion Name</span>
<div class="b " style="left:687px;top:351.7px;width:102.5px;height:56px;background:#f5efd3;border-bottom:0.7px solid #d8d4bd"></div>
<div class="b " style="left:727.3000000000001px;top:351.7px;width:0.7px;height:56px;background:#d3d0bb;"></div>
<span class="t" style="left:688px;top:375.74px;font-size:5.83px;line-height:8.54px;color:#1e1e1e;">Motion</span>
<svg style="left:784px;top:401.00px" width="5.400" height="5" viewBox="0 0 11 10"><path d="M1 5h8.500M6 1.500L9.500 5 6 8.500" stroke="#aaa" stroke-width="1.300" fill="none"/></svg>
<div class="b " style="left:687px;top:408.5px;width:102.5px;height:11.5px;background:#c88f06;"></div>
<svg style="left:688.700px;top:411.70px" width="5.400" height="5.400" viewBox="0 0 12 12"><circle cx="6" cy="6" r="6" fill="#f7ecd0"/><path d="M2.800 4.800L6 8.300l3.200-3.500" stroke="#c88f06" stroke-width="1.900" fill="none"/></svg>
<span class="t" style="left:696px;top:410.76px;font-size:5.77px;line-height:8.54px;color:#f6ecd0;">Materials Used</span>
<div class="b " style="left:687px;top:421.3px;width:102.5px;height:9px;background:#e9e9e9;border-bottom:0.7px solid #d9d9d9"></div>
<div class="b " style="left:727.3000000000001px;top:421.3px;width:0.7px;height:9px;background:#d6d6d6;"></div>
<span class="t" style="left:688px;top:422.81px;font-size:5.63px;line-height:8.54px;color:#b5b5b5;">Material Na...</span>
<span class="t" style="left:729.3px;top:422.65px;font-size:6.10px;line-height:8.54px;color:#b9b9b9;letter-spacing:0.077px;">main-chalet-pack-b...</span>
<div class="b " style="left:686.5px;top:430.3px;width:103.5px;height:1.2px;background:#c8c8c8;"></div>
<div class="b " style="left:2px;top:432.7px;width:795.8px;height:15px;background:#5f5f5f;"></div>
<span class="t" style="left:3.3px;top:435.66px;font-size:6.07px;line-height:8.54px;color:#e2e2e2;">Manage all materials used in the game, including 3D models, textures, sprites, images, and sounds. 3D stamps and 2D stamps are also created here.</span>
<div class="b " style="left:713.5px;top:435.5px;width:37.5px;height:10.2px;background:#bfbfbf;border-radius:1.2px"></div>
<div class="b " style="left:753.3px;top:435.5px;width:42.5px;height:10.2px;background:#bfbfbf;border-radius:1.2px"></div>
<div class="b " style="left:715.5px;top:437px;width:7px;height:7px;background:#3f86e8;border-radius:1px;border:0.5px solid #dfe9fb"></div>
<svg style="left:715.500px;top:437px" width="7" height="7" viewBox="0 0 14 14"><path d="M3 7.200l3 3 5-6" stroke="#fff" stroke-width="2" fill="none"/></svg>
<span class="t" style="left:726px;top:435.94px;font-size:5.25px;line-height:8.54px;color:#222;letter-spacing:-0.080px;">OK</span>
<div class="b " style="left:755.2px;top:437px;width:7px;height:7px;background:#e44a86;border-radius:1px;border:0.5px solid #f9d9e6"></div>
<svg style="left:755.200px;top:437px" width="7" height="7" viewBox="0 0 14 14"><path d="M3.500 3.500l7 7M10.500 3.500l-7 7" stroke="#fff" stroke-width="2" fill="none"/></svg>
<span class="t" style="left:766px;top:435.81px;font-size:5.62px;line-height:8.54px;color:#222;">Cancel</span>
</div></body></html>
